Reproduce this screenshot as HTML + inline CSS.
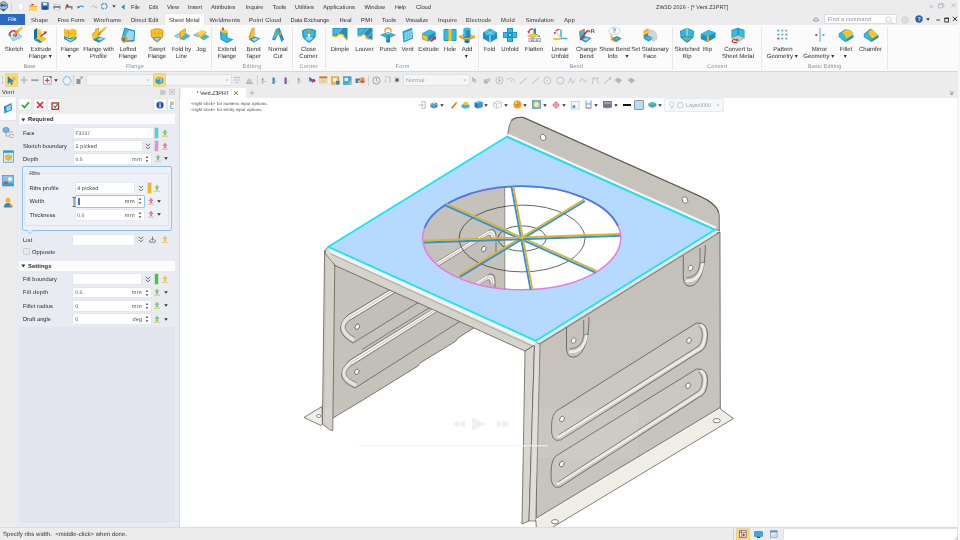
<!DOCTYPE html>
<html><head><meta charset="utf-8"><title>ZW3D 2026 - [* Vent.Z3PRT]</title>
<style>
html,body{margin:0;padding:0;background:#fff}
#r{filter:blur(0.35px);text-rendering:geometricPrecision;position:relative;width:960px;height:540px;overflow:hidden;background:#fff;font-family:"Liberation Sans",sans-serif;font-size:6px;color:#333}
.a{position:absolute}
.t{position:absolute;white-space:nowrap;line-height:10px;height:10px}
svg{position:absolute;overflow:visible}
</style></head>
<body><div id="r">
<div class="a" style="left:0px;top:0px;width:960px;height:25px;background:#ececed;"></div>
<div class="a" style="left:0px;top:24.7px;width:960px;height:46.6px;background:#fbfbfb;"></div>
<div class="a" style="left:0px;top:71.1px;width:960px;height:0.9px;background:#d6d7d9;"></div>
<div class="a" style="left:0px;top:72px;width:960px;height:15.5px;background:#ececed;"></div>
<div class="t" style="left:131.00px;top:3px;font-size:5.8px;color:#2c2c2c;letter-spacing:-0.086px;">File</div>
<div class="t" style="left:149.00px;top:3px;font-size:5.39px;color:#2c2c2c;letter-spacing:-0.072px;">Edit</div>
<div class="t" style="left:167.00px;top:3px;font-size:5.8px;color:#2c2c2c;letter-spacing:-0.117px;">View</div>
<div class="t" style="left:188.00px;top:3px;font-size:5.8px;color:#2c2c2c;letter-spacing:-0.084px;">Insert</div>
<div class="t" style="left:211.00px;top:3px;font-size:5.8px;color:#2c2c2c;letter-spacing:-0.050px;">Attributes</div>
<div class="t" style="left:245.50px;top:3px;font-size:5.8px;color:#2c2c2c;letter-spacing:0.038px;">Inquire</div>
<div class="t" style="left:272.50px;top:3px;font-size:5.8px;color:#2c2c2c;letter-spacing:-0.008px;">Tools</div>
<div class="t" style="left:295.00px;top:3px;font-size:5.8px;color:#2c2c2c;letter-spacing:0.034px;">Utilities</div>
<div class="t" style="left:323.00px;top:3px;font-size:5.8px;color:#2c2c2c;letter-spacing:0.061px;">Applications</div>
<div class="t" style="left:364.50px;top:3px;font-size:5.8px;color:#2c2c2c;letter-spacing:-0.021px;">Window</div>
<div class="t" style="left:395.00px;top:3px;font-size:5.39px;color:#2c2c2c;letter-spacing:-0.021px;">Help</div>
<div class="t" style="left:416.00px;top:3px;font-size:5.8px;color:#2c2c2c;letter-spacing:-0.031px;">Cloud</div>
<div class="t" style="left:656.00px;top:3px;font-size:5.4px;color:#2c2c2c;letter-spacing:0.114px;">ZW3D 2026 - [* Vent.Z3PRT]</div>
<div class="a" style="left:0px;top:14px;width:25px;height:10.7px;background:#2d69c2;"></div>
<div class="t" style="left:8.00px;top:15px;font-size:5.39px;color:#fff;letter-spacing:-0.046px;">File</div>
<div class="a" style="left:164.6px;top:14.3px;width:39px;height:11px;background:#fbfbfb;border-radius:1px 1px 0 0;box-shadow:0 0 0 0.5px #dcdfe3"></div>
<div class="a" style="left:164px;top:24.7px;width:41px;height:1px;background:#fbfbfb;"></div>
<div class="t" style="left:31.00px;top:16px;font-size:5.8px;color:#2c2c2c;letter-spacing:0.146px;">Shape</div>
<div class="t" style="left:57.50px;top:16px;font-size:5.8px;color:#2c2c2c;letter-spacing:-0.007px;">Free Form</div>
<div class="t" style="left:93.50px;top:16px;font-size:5.8px;color:#2c2c2c;letter-spacing:0.140px;">Wireframe</div>
<div class="t" style="left:131.00px;top:16px;font-size:5.8px;color:#2c2c2c;letter-spacing:0.068px;">Direct Edit</div>
<div class="t" style="left:169.00px;top:16px;font-size:5.8px;color:#2c2c2c;letter-spacing:-0.041px;">Sheet Metal</div>
<div class="t" style="left:209.50px;top:16px;font-size:5.8px;color:#2c2c2c;letter-spacing:0.178px;">Weldments</div>
<div class="t" style="left:249.00px;top:16px;font-size:5.8px;color:#2c2c2c;letter-spacing:0.229px;">Point Cloud</div>
<div class="t" style="left:290.50px;top:16px;font-size:5.8px;color:#2c2c2c;letter-spacing:-0.051px;">Data Exchange</div>
<div class="t" style="left:339.50px;top:16px;font-size:5.8px;color:#2c2c2c;letter-spacing:0.018px;">Heal</div>
<div class="t" style="left:361.00px;top:16px;font-size:5.8px;color:#2c2c2c;letter-spacing:0.396px;">PMI</div>
<div class="t" style="left:382.00px;top:16px;font-size:5.8px;color:#2c2c2c;letter-spacing:0.092px;">Tools</div>
<div class="t" style="left:405.50px;top:16px;font-size:5.8px;color:#2c2c2c;letter-spacing:-0.012px;">Visualize</div>
<div class="t" style="left:438.00px;top:16px;font-size:5.8px;color:#2c2c2c;letter-spacing:0.252px;">Inquire</div>
<div class="t" style="left:466.00px;top:16px;font-size:5.8px;color:#2c2c2c;letter-spacing:0.111px;">Electrode</div>
<div class="t" style="left:501.00px;top:16px;font-size:5.8px;color:#2c2c2c;letter-spacing:0.357px;">Mold</div>
<div class="t" style="left:525.50px;top:16px;font-size:5.8px;color:#2c2c2c;letter-spacing:0.142px;">Simulation</div>
<div class="t" style="left:564.00px;top:16px;font-size:5.8px;color:#2c2c2c;letter-spacing:0.227px;">App</div>
<div class="a" style="left:825.4px;top:15.1px;width:70.2px;height:7.7px;background:#fff;box-shadow:0 0 0 0.5px #c9ccd1"></div>
<div class="t" style="left:827.80px;top:15px;font-size:5.4px;color:#8a8f96;letter-spacing:0.235px;">Find a command</div>
<div class="a" style="left:56px;top:27px;width:0.7px;height:42.5px;background:#e7e8ea;"></div>
<div class="a" style="left:211px;top:27px;width:0.7px;height:42.5px;background:#e7e8ea;"></div>
<div class="a" style="left:291.8px;top:27px;width:0.7px;height:42.5px;background:#e7e8ea;"></div>
<div class="a" style="left:325.3px;top:27px;width:0.7px;height:42.5px;background:#e7e8ea;"></div>
<div class="a" style="left:478px;top:27px;width:0.7px;height:42.5px;background:#e7e8ea;"></div>
<div class="a" style="left:671.8px;top:27px;width:0.7px;height:42.5px;background:#e7e8ea;"></div>
<div class="a" style="left:761.3px;top:27px;width:0.7px;height:42.5px;background:#e7e8ea;"></div>
<div class="a" style="left:887px;top:27px;width:0.7px;height:42.5px;background:#e7e8ea;"></div>
<div class="t" style="left:23.50px;top:62px;font-size:5.5px;color:#8c9098;letter-spacing:-0.134px;">Base</div>
<div class="t" style="left:126.00px;top:62px;font-size:5.5px;color:#8c9098;letter-spacing:0.197px;">Flange</div>
<div class="t" style="left:242.50px;top:62px;font-size:5.5px;color:#8c9098;letter-spacing:0.312px;">Editing</div>
<div class="t" style="left:299.50px;top:62px;font-size:5.5px;color:#8c9098;letter-spacing:0.282px;">Corner</div>
<div class="t" style="left:395.50px;top:62px;font-size:5.5px;color:#8c9098;letter-spacing:0.292px;">Form</div>
<div class="t" style="left:569.50px;top:62px;font-size:5.5px;color:#8c9098;letter-spacing:0.164px;">Bend</div>
<div class="t" style="left:707.00px;top:62px;font-size:5.5px;color:#8c9098;letter-spacing:0.178px;">Convert</div>
<div class="t" style="left:808.00px;top:62px;font-size:5.5px;color:#8c9098;letter-spacing:0.131px;">Basic Editing</div>
<div class="t" style="left:4.83px;top:45px;font-size:6.0px;color:#2e2e2e;">Sketch</div>
<div class="t" style="left:30.66px;top:45px;font-size:6.0px;color:#2e2e2e;">Extrude</div>
<div class="t" style="left:28.74px;top:52px;font-size:6.0px;color:#2e2e2e;">Flange ▾</div>
<div class="t" style="left:60.83px;top:45px;font-size:6.0px;color:#2e2e2e;">Flange</div>
<div class="t" style="left:67.75px;top:52px;font-size:6.0px;color:#2e2e2e;">▾</div>
<div class="t" style="left:83.16px;top:45px;font-size:6.0px;color:#2e2e2e;">Flange with</div>
<div class="t" style="left:90.00px;top:52px;font-size:6.0px;color:#2e2e2e;">Profile</div>
<div class="t" style="left:119.66px;top:45px;font-size:6.0px;color:#2e2e2e;">Lofted</div>
<div class="t" style="left:118.83px;top:52px;font-size:6.0px;color:#2e2e2e;">Flange</div>
<div class="t" style="left:148.66px;top:45px;font-size:6.0px;color:#2e2e2e;">Swept</div>
<div class="t" style="left:147.83px;top:52px;font-size:6.0px;color:#2e2e2e;">Flange</div>
<div class="t" style="left:171.66px;top:45px;font-size:6.0px;color:#2e2e2e;">Fold by</div>
<div class="t" style="left:175.83px;top:52px;font-size:6.0px;color:#2e2e2e;">Line</div>
<div class="t" style="left:196.16px;top:45px;font-size:6.0px;color:#2e2e2e;">Jog</div>
<div class="t" style="left:217.66px;top:45px;font-size:6.0px;color:#2e2e2e;">Extend</div>
<div class="t" style="left:217.83px;top:52px;font-size:6.0px;color:#2e2e2e;">Flange</div>
<div class="t" style="left:246.49px;top:45px;font-size:6.0px;color:#2e2e2e;">Bend</div>
<div class="t" style="left:246.00px;top:52px;font-size:6.0px;color:#2e2e2e;">Taper</div>
<div class="t" style="left:268.33px;top:45px;font-size:6.0px;color:#2e2e2e;">Normal</div>
<div class="t" style="left:273.33px;top:52px;font-size:6.0px;color:#2e2e2e;">Cut</div>
<div class="t" style="left:300.83px;top:45px;font-size:6.0px;color:#2e2e2e;">Close</div>
<div class="t" style="left:299.33px;top:52px;font-size:6.0px;color:#2e2e2e;">Corner</div>
<div class="t" style="left:330.66px;top:45px;font-size:6.0px;color:#2e2e2e;">Dimple</div>
<div class="t" style="left:355.33px;top:45px;font-size:6.0px;color:#2e2e2e;">Louver</div>
<div class="t" style="left:379.49px;top:45px;font-size:6.0px;color:#2e2e2e;">Punch</div>
<div class="t" style="left:401.49px;top:45px;font-size:6.0px;color:#2e2e2e;">Vent</div>
<div class="t" style="left:418.16px;top:45px;font-size:6.0px;color:#2e2e2e;">Extrude</div>
<div class="t" style="left:443.83px;top:45px;font-size:6.0px;color:#2e2e2e;">Hole</div>
<div class="t" style="left:461.66px;top:45px;font-size:6.0px;color:#2e2e2e;">Add</div>
<div class="t" style="left:464.75px;top:52px;font-size:6.0px;color:#2e2e2e;">▾</div>
<div class="t" style="left:483.66px;top:45px;font-size:6.0px;color:#2e2e2e;">Fold</div>
<div class="t" style="left:501.33px;top:45px;font-size:6.0px;color:#2e2e2e;">Unfold</div>
<div class="t" style="left:524.83px;top:45px;font-size:6.0px;color:#2e2e2e;">Flatten</div>
<div class="t" style="left:551.66px;top:45px;font-size:6.0px;color:#2e2e2e;">Linear</div>
<div class="t" style="left:551.33px;top:52px;font-size:6.0px;color:#2e2e2e;">Unfold</div>
<div class="t" style="left:575.99px;top:45px;font-size:6.0px;color:#2e2e2e;">Change</div>
<div class="t" style="left:579.49px;top:52px;font-size:6.0px;color:#2e2e2e;">Bend</div>
<div class="t" style="left:599.16px;top:45px;font-size:6.0px;color:#2e2e2e;">Show Bend</div>
<div class="t" style="left:631.16px;top:45px;font-size:6.0px;color:#2e2e2e;">Set Stationary</div>
<div class="t" style="left:643.33px;top:52px;font-size:6.0px;color:#2e2e2e;">Face</div>
<div class="t" style="left:674.49px;top:45px;font-size:6.0px;color:#2e2e2e;">Sketched</div>
<div class="t" style="left:682.50px;top:52px;font-size:6.0px;color:#2e2e2e;">Rip</div>
<div class="t" style="left:703.00px;top:45px;font-size:6.0px;color:#2e2e2e;">Rip</div>
<div class="t" style="left:724.16px;top:45px;font-size:6.0px;color:#2e2e2e;">Convert to</div>
<div class="t" style="left:721.99px;top:52px;font-size:6.0px;color:#2e2e2e;">Sheet Metal</div>
<div class="t" style="left:773.33px;top:45px;font-size:6.0px;color:#2e2e2e;">Pattern</div>
<div class="t" style="left:766.75px;top:52px;font-size:6.0px;color:#2e2e2e;">Geometry ▾</div>
<div class="t" style="left:811.67px;top:45px;font-size:6.0px;color:#2e2e2e;">Mirror</div>
<div class="t" style="left:803.25px;top:52px;font-size:6.0px;color:#2e2e2e;">Geometry ▾</div>
<div class="t" style="left:839.67px;top:45px;font-size:6.0px;color:#2e2e2e;">Fillet</div>
<div class="t" style="left:843.75px;top:52px;font-size:6.0px;color:#2e2e2e;">▾</div>
<div class="t" style="left:859.00px;top:45px;font-size:6.0px;color:#2e2e2e;">Chamfer</div>
<svg style="left:7.0px;top:27.3px" width="16" height="16" viewBox="0 0 16 16"><polygon points="1,7 9,3 15,10 6,14" fill="#9fd8f2" stroke="#6aa9d6" stroke-width=".5"/><polygon points="2.5,7.3 8.5,4.3 11,7.5 5,10.5" fill="#ffffff" opacity=".8"/><path d="M3.5 9 A3.2 3.2 0 1 1 8 9.6" fill="none" stroke="#d9242b" stroke-width="1.3"/><line x1="7" y1="8" x2="13" y2="2.2" stroke="#e9951f" stroke-width="2.4" stroke-linecap="round" /><line x1="12" y1="3.2" x2="14.6" y2="0.8" stroke="#f6c520" stroke-width="2.4" stroke-linecap="round" /><polygon points="5.5,9.5 6.2,7.6 7.6,8.8" fill="#555" /></svg>
<svg style="left:33.0px;top:27.3px" width="16" height="16" viewBox="0 0 16 16"><polygon points="1,3 4,1 4,11 1,13" fill="#146c9e" /><polygon points="4,1 8.5,3.5 8.5,9 4,11.5" fill="#f6c520" /><polygon points="4,11.5 8.5,9 14,11.5 9.5,15 " fill="#f6c520" /><polygon points="1,13 4,11.5 9.5,15 7,16" fill="#1f8fc6" /><polygon points="4,1 8.5,3.5 8.5,5 4,2.5" fill="#fbdc55" /><line x1="8" y1="9" x2="12" y2="6" stroke="#d9242b" stroke-width="1.3" stroke-linecap="round" /><polygon points="10.5,4.5 14,4.6 12.5,7.6" fill="#d9242b" /></svg>
<svg style="left:62.0px;top:27.3px" width="16" height="16" viewBox="0 0 16 16"><polygon points="2,1.5 6,3 6,10.5 2,9" fill="#f6c520" /><polygon points="7.5,3 11,1.5 14.5,3 14.5,10 11,11.5 7.5,10.5" fill="#f6c520" /><polygon points="6,3 7.5,3 7.5,10.5 6,10.5" fill="#e9951f" /><polygon points="2,9 6,10.5 8,11 14.5,10 14.5,12 8.5,15.5 2,12" fill="#1f8fc6" /><polygon points="2.5,10.5 8.5,12.3 14,10.7 8.5,14.5" fill="#9fd8f2" /><line x1="2" y1="5" x2="6" y2="6.5" stroke="#e9951f" stroke-width="0.5" stroke-linecap="round" /><line x1="7.5" y1="6.5" x2="14.5" y2="6.3" stroke="#e9951f" stroke-width="0.5" stroke-linecap="round" /></svg>
<svg style="left:90.5px;top:27.3px" width="16" height="16" viewBox="0 0 16 16"><polygon points="1,7 4,4.5 4,2 8,0.8 8,9.5 2,13" fill="#e9951f" /><polygon points="1.5,7.5 4.5,5.2 4.5,2.8 7.5,1.8 7.5,9 2.3,12" fill="#f6c520" /><polygon points="2,13 8,9.5 14.5,11.5 8,15.8" fill="#1f8fc6" /><polygon points="6,12 9.5,10.5 13,11.6 9,13.8" fill="#9fd8f2" /><line x1="8.5" y1="6.5" x2="12.5" y2="2.5" stroke="#e9951f" stroke-width="2" stroke-linecap="round" /><line x1="12" y1="3" x2="14.5" y2="0.8" stroke="#f6c520" stroke-width="2" stroke-linecap="round" /><polygon points="7.5,8 8,6.3 9.3,7.4" fill="#555" /></svg>
<svg style="left:120.0px;top:27.3px" width="16" height="16" viewBox="0 0 16 16"><polygon points="4.5,0.5 15,3.5 14.5,14 3,15.5 1.5,11" fill="#1f8fc6" /><polygon points="5.5,2 14,4.5 13.5,12.8 5.5,13.5" fill="#9fd8f2" /><polygon points="5.5,2 9,3 4.5,11.5 2.5,10.5" fill="#30bfe4" /><circle cx="4.2" cy="12.2" r="2.6" fill="none" stroke="#e9951f" stroke-width="1.3"/><line x1="6.5" y1="13.5" x2="13" y2="14.6" stroke="#e9951f" stroke-width="1.1" stroke-linecap="round" /></svg>
<svg style="left:149.0px;top:27.3px" width="16" height="16" viewBox="0 0 16 16"><path d="M1.5 3 Q8 -0.5 14.5 3 L14 9.5 Q12 13 8 15.5 Q4 13 2 9.5 Z" fill="#e9951f" /><path d="M2.5 3.6 Q8 0.8 13.5 3.6 L13 9 Q11.5 11.5 8 11 Q4.5 11.5 3 9 Z" fill="#f6c520" /><polygon points="4.5,11.2 8,10 11.5,11.2 8,14.8" fill="#9fd8f2" stroke="#1f8fc6" stroke-width=".8"/><line x1="6" y1="2.3" x2="6" y2="10.5" stroke="#e9951f" stroke-width="0.5" stroke-linecap="round" /><line x1="10" y1="2.3" x2="10" y2="10.5" stroke="#e9951f" stroke-width="0.5" stroke-linecap="round" /><line x1="2.5" y1="6.5" x2="13.5" y2="6.5" stroke="#e9951f" stroke-width="0.5" stroke-linecap="round" /></svg>
<svg style="left:174.0px;top:27.3px" width="16" height="16" viewBox="0 0 16 16"><polygon points="0.5,9 5.5,6.5 8.5,8 3.5,10.8" fill="#9fd8f2" stroke="#1f8fc6" stroke-width=".5"/><polygon points="8.5,8 12,6.5 16,9 9.5,13 6.5,11.5" fill="#30bfe4" stroke="#1f8fc6" stroke-width=".5"/><polygon points="6,5 11.5,1.5 11.5,7 6.5,11.5" fill="#f6c520" stroke="#e9951f" stroke-width=".8"/><line x1="6" y1="5" x2="6.2" y2="13" stroke="#e9951f" stroke-width="0.9" stroke-linecap="round" /></svg>
<svg style="left:193.0px;top:27.3px" width="16" height="16" viewBox="0 0 16 16"><polygon points="0.5,8 4.5,6 8,7.5 4,9.8" fill="#9fd8f2" stroke="#1f8fc6" stroke-width=".5"/><polygon points="7,10 12,7.5 16,9.8 10.5,13" fill="#30bfe4" stroke="#1f8fc6" stroke-width=".5"/><polygon points="4,6.5 9,3.5 13,5 12.5,7.5 7.5,10.5 4.5,9" fill="#f6c520" stroke="#e9951f" stroke-width=".6"/><polygon points="4,6.5 9,3.5 13,5 8,8" fill="#fbdc55" /></svg>
<svg style="left:219.0px;top:27.3px" width="16" height="16" viewBox="0 0 16 16"><polygon points="1,4 2.5,3 8.5,5 8.5,10.5 14.5,12.5 8,16 1.5,12.5" fill="#1f8fc6" /><polygon points="2.5,4.5 7.5,6.2 7.5,11 12.5,12.6 8,14.8 2.5,12" fill="#30bfe4" /><polygon points="1,4 2.5,2 8.5,3.5 8.5,5.5 7,6.5 1.5,5" fill="#f6c520" /><polygon points="3.2,0.5 4.8,0.5 4.8,3 3.2,3" fill="#d9242b" /></svg>
<svg style="left:245.5px;top:27.3px" width="16" height="16" viewBox="0 0 16 16"><polygon points="6,1 8.5,0.5 8.5,9.5 3,12.5 2.5,10" fill="#e9951f" /><polygon points="6.5,2 8,1.8 8,9 3.5,11.5" fill="#f6c520" /><polygon points="3,12.5 8.5,9.5 14.5,11.5 8,15.5" fill="#1f8fc6" /><polygon points="5.5,12.5 9,10.7 12.8,11.8 8.5,14.2" fill="#9fd8f2" /></svg>
<svg style="left:270.0px;top:27.3px" width="16" height="16" viewBox="0 0 16 16"><polygon points="6,2 9.5,0.8 14,12.5 11.5,15 8.5,7 5,13.5 2,12.5" fill="#1f8fc6" /><polygon points="6.5,3 9,2 8.5,6.5 4.5,12 3,11.8" fill="#30bfe4" /><ellipse cx="5.8" cy="8.2" rx="1.1" ry="1.6" fill="#e9951f" /><ellipse cx="10.3" cy="6.6" rx="1.1" ry="1.6" fill="#e9951f" /></svg>
<svg style="left:300.5px;top:27.3px" width="16" height="16" viewBox="0 0 16 16"><path d="M1 3.5 Q8 -0.5 15 3.5 L14.5 10 Q12 13.5 8 16 Q4 13.5 1.5 10 Z" fill="#1f8fc6" /><polygon points="2.5,4 7,2.3 7,9 2.8,10" fill="#30bfe4" /><polygon points="9,2.3 13.5,4 13.2,10 9,9" fill="#30bfe4" /><polygon points="7,2.3 9,2.3 9,7.5 7,7.5" fill="#e9951f" /><polygon points="3.5,11 8,9 12.5,11 8,14.5" fill="#9fd8f2" /><path d="M6.8 7 L9.2 7 L9.2 9 L8 10.2 L6.8 9 Z" fill="#ffffff" /></svg>
<svg style="left:332.0px;top:27.3px" width="16" height="16" viewBox="0 0 16 16"><polygon points="0.5,1 15.5,1 15.5,13 13,11 10.5,7.5 7,7 4.5,9.5 0.5,9" fill="#1f8fc6" /><polygon points="1.5,1.5 9,1.5 3,8.2 1.5,8" fill="#30bfe4" /><path d="M0.5 9.2 L4.5 9.7 L7 7.2 L10.5 7.7 L13 11.2 L15.5 13.2" fill="none" stroke="#f6c520" stroke-width="1.3"/><line x1="10" y1="1.5" x2="5.5" y2="6.5" stroke="#ffffff" stroke-width="0.8" stroke-linecap="round" opacity=".8"/></svg>
<svg style="left:356.5px;top:27.3px" width="16" height="16" viewBox="0 0 16 16"><polygon points="0.5,1 15.5,1 15.5,12.5 9,11.5 9,9 6.5,7 4,9 0.5,9" fill="#1f8fc6" /><polygon points="1.5,1.5 9,1.5 3,8.2 1.5,8" fill="#30bfe4" /><path d="M0.5 9.2 L4 9.2 L6.5 7.2 L9 9.2 L9 11.6 L15.5 12.8" fill="none" stroke="#f6c520" stroke-width="1.2"/><line x1="11" y1="1.5" x2="6.5" y2="6.3" stroke="#ffffff" stroke-width="0.8" stroke-linecap="round" opacity=".8"/><line x1="10" y1="11" x2="15.5" y2="5" stroke="#9fd8f2" stroke-width="0.8" stroke-linecap="round" /></svg>
<svg style="left:380.0px;top:27.3px" width="16" height="16" viewBox="0 0 16 16"><polygon points="0,8 8,5 16,8 8,11.5" fill="#1f8fc6" /><polygon points="1.5,8 8,5.8 14.5,8 8,10.5" fill="#30bfe4" /><path d="M5 5.5 L5 2.5 Q8 -0.5 11 2.5 L11 5.5" fill="none" stroke="#e9951f" stroke-width="1.2"/><rect x="6" y="6.5" width="4" height="8" fill="#1f8fc6" /><ellipse cx="8" cy="14.5" rx="2" ry="1" fill="#146c9e" /><ellipse cx="8" cy="6.5" rx="2" ry="1" fill="#9fd8f2" /><rect x="6.6" y="7" width="1.2" height="7.5" fill="#30bfe4" /></svg>
<svg style="left:399.5px;top:27.3px" width="16" height="16" viewBox="0 0 16 16"><polygon points="2.5,4.5 12,0.8 13,11.5 3.5,15.5" fill="#1f8fc6" /><polygon points="3.5,5.2 11.2,2.2 12,10.8 4.3,14.2" fill="#30bfe4" /><polygon points="4.6,6.0 6.6,5.2 6.8,7.2 4.8,8.0" fill="#9fd8f2" /><polygon points="4.6,8.8 6.6,8.0 6.8,10.0 4.8,10.8" fill="#9fd8f2" /><polygon points="4.6,11.6 6.6,10.8 6.8,12.8 4.8,13.6" fill="#9fd8f2" /><polygon points="7.3,4.974 9.3,4.174 9.5,6.174 7.5,6.974" fill="#9fd8f2" /><polygon points="7.3,7.774000000000001 9.3,6.974 9.5,8.974 7.5,9.774000000000001" fill="#9fd8f2" /><polygon points="7.3,10.574 9.3,9.774000000000001 9.5,11.774000000000001 7.5,12.574" fill="#9fd8f2" /><polygon points="9.8,4.024 11.8,3.224 12.0,5.224 10.0,6.024" fill="#9fd8f2" /><polygon points="9.8,6.824000000000001 11.8,6.024 12.0,8.024 10.0,8.824" fill="#9fd8f2" /><polygon points="9.8,9.623999999999999 11.8,8.824 12.0,10.824 10.0,11.623999999999999" fill="#9fd8f2" /></svg>
<svg style="left:420.5px;top:27.3px" width="16" height="16" viewBox="0 0 16 16"><polygon points="1,6.5 8.5,2.5 14.5,5 14.5,10 7,14.5 1,12" fill="#1f8fc6" /><polygon points="1,6.5 8.5,2.5 14.5,5 7,9" fill="#30bfe4" /><polygon points="1.3,7.2 6.8,9.5 6.8,14 1.3,11.7" fill="#f6c520" stroke="#e9951f" stroke-width=".5"/><line x1="10" y1="14" x2="13.5" y2="11.5" stroke="#d9242b" stroke-width="1.6" stroke-linecap="round" /><polygon points="12,10 15.5,9.8 14.5,13" fill="#d9242b" /></svg>
<svg style="left:442.0px;top:27.3px" width="16" height="16" viewBox="0 0 16 16"><rect x="1.5" y="2" width="13" height="12" fill="#1f8fc6" rx="1"/><rect x="2.3" y="2.8" width="4" height="10.4" fill="#30bfe4" /><rect x="9.7" y="2.8" width="4" height="10.4" fill="#30bfe4" /><rect x="6.3" y="2" width="3.4" height="12" fill="#f6c520" /></svg>
<svg style="left:459.0px;top:27.3px" width="16" height="16" viewBox="0 0 16 16"><polygon points="0,9 8,6 16,9 16,10.5 8,14 0,10.5" fill="#e9951f" /><polygon points="0,9 8,6 16,9 8,12.2" fill="#f6c520" /><rect x="4.5" y="2" width="7" height="7.5" fill="#1f8fc6" /><ellipse cx="8" cy="9.5" rx="3.5" ry="1.5" fill="#1f8fc6" /><ellipse cx="8" cy="2" rx="3.5" ry="1.5" fill="#30bfe4" /><rect x="5" y="3.5" width="2" height="6" fill="#30bfe4" /><rect x="5.5" y="12.5" width="5" height="2.5" fill="#1f8fc6" /><ellipse cx="8" cy="15" rx="2.5" ry="1" fill="#146c9e" /></svg>
<svg style="left:481.5px;top:27.3px" width="16" height="16" viewBox="0 0 16 16"><path d="M1 5.5 L8 1.5 L15 5.5 L15 11.5 L8 15.5 L1 11.5 Z" fill="#1f8fc6" stroke-linejoin="round"/><polygon points="1.5,5.7 8,2.3 14.5,5.7 8,9" fill="#30bfe4" /><polygon points="1.5,6.5 7.5,9.6 7.5,14.6 1.5,11.2" fill="#1f8fc6" /><line x1="8" y1="9" x2="8" y2="15" stroke="#ffffff" stroke-width="0.9" stroke-linecap="round" /><line x1="4" y1="4" x2="12" y2="8" stroke="#9fd8f2" stroke-width="0.6" stroke-linecap="round" /><line x1="12" y1="4" x2="4" y2="8" stroke="#9fd8f2" stroke-width="0.6" stroke-linecap="round" /></svg>
<svg style="left:502.0px;top:27.3px" width="16" height="16" viewBox="0 0 16 16"><path d="M5 1 h6 v4 h4 v6 h-4 v4 h-6 v-4 h-4 v-6 h4 z" fill="#1f8fc6" stroke-linejoin="round" rx="1"/><rect x="5.8" y="1.8" width="4.4" height="3.4" fill="#30bfe4" /><rect x="1.8" y="5.8" width="3.4" height="4.4" fill="#30bfe4" /><rect x="10.8" y="5.8" width="3.4" height="4.4" fill="#30bfe4" /><rect x="5.8" y="10.8" width="4.4" height="3.4" fill="#30bfe4" /><rect x="7" y="7" width="2" height="2" fill="#9fd8f2" /></svg>
<svg style="left:526.0px;top:27.3px" width="16" height="16" viewBox="0 0 16 16"><polygon points="7.5,1.5 10,1.5 10,7 14,8.5 14,10 7.5,8" fill="#1f8fc6" /><polygon points="1.5,8 7.5,6.5 14,8.5 8,10.5" fill="#f6c520" /><polygon points="1.5,8 8,10.5 8,11.5 1.5,9" fill="#e9951f" /><rect x="2.5" y="11.3" width="12.5" height="3.7" fill="#8e9bb0" /><rect x="3.2" y="12" width="11" height="2.2" fill="#dfe6f0" /><rect x="5" y="12.6" width="3" height="1" fill="#5577aa" /><rect x="10" y="12.6" width="2" height="1" fill="#5577aa" /><path d="M7 2.2 Q3.5 1.5 2.8 5" fill="none" stroke="#d9242b" stroke-width="1.2"/><polygon points="1.3,4.3 4.3,4.6 2.8,6.8" fill="#d9242b" /></svg>
<svg style="left:552.5px;top:27.3px" width="16" height="16" viewBox="0 0 16 16"><path d="M8 2.5 L8 11.5 L14.5 11.5" fill="none" stroke="#30bfe4" stroke-width="1.6"/><line x1="1" y1="12" x2="7" y2="12" stroke="#f6c520" stroke-width="1.8" stroke-linecap="round" /><path d="M6.5 2.5 Q2.5 2.5 1.8 6" fill="none" stroke="#d9242b" stroke-width="1.1"/><polygon points="0.6,5 3.2,5.5 1.8,7.6" fill="#d9242b" /><line x1="7.5" y1="10.5" x2="2.5" y2="4.5" stroke="#d0d4da" stroke-width="1.2" stroke-linecap="round" /></svg>
<svg style="left:577.5px;top:27.3px" width="16" height="16" viewBox="0 0 16 16"><polygon points="1,4.5 6.5,1.5 7,9 2,12.5" fill="#1f8fc6" /><polygon points="2,12.5 7,9 13.5,11 8,15.5" fill="#1f8fc6" /><polygon points="2,5.3 5.8,3 6.2,8.8 2.8,11" fill="#30bfe4" /><polygon points="5,12.6 8,10.5 11.5,11.5 8,14" fill="#9fd8f2" /><line x1="2.5" y1="12.5" x2="9.5" y2="3.5" stroke="#d9242b" stroke-width="1.4" stroke-linecap="round" /><polygon points="1.5,4.8 6.5,2 6.7,3.2 1.8,6" fill="#e9951f" /></svg>
<svg style="left:606.5px;top:27.3px" width="16" height="16" viewBox="0 0 16 16"><polygon points="3.5,6 5,5.5 5.5,11 10,9 15,11.5 9,15.5 4,13" fill="#e9951f" /><polygon points="4,6.5 5,6 5.5,11.5 4.4,12.4" fill="#f6c520" /><polygon points="5.5,11.5 10,9.3 14,11.4 9,14.5" fill="#1f8fc6" /><polygon points="7,12 10,10.5 12.5,11.5 9.3,13.5" fill="#30bfe4" /><ellipse cx="7.5" cy="4" rx="5.5" ry="3.8" fill="#ffffff" stroke="#9fc4e8" stroke-width=".7"/><polygon points="5,7 7,7.2 4.5,9.2" fill="#ffffff" /></svg>
<svg style="left:642.0px;top:27.3px" width="16" height="16" viewBox="0 0 16 16"><polygon points="1.5,4 6.5,1 6.5,8.5 1.5,11.5" fill="#e9951f" /><polygon points="2,5 6,2.6 6,6 2,8.4" fill="#f6c520" /><polygon points="2,8.6 6,6.2 6,8.3 2,10.8" fill="#1f8fc6" /><polygon points="1.5,11.5 6.5,8.5 12,11 6.5,14.5" fill="#1f8fc6" /><polygon points="3,11.5 6.5,9.5 10.3,11 6.7,13.3" fill="#30bfe4" /><path d="M7 3 Q12 2 14.5 7 L15 12 L11 14.5 Q9 9 7 7 Z" fill="#c9ced6" opacity=".85" stroke="#a9b0bb" stroke-width=".5"/></svg>
<svg style="left:679.0px;top:27.3px" width="16" height="16" viewBox="0 0 16 16"><path d="M1 4 L8 0.8 L15 4 L14.5 10.5 Q11 14 8 15.8 Q5 14 1.5 10.5 Z" fill="#1f8fc6" /><polygon points="2,4.5 7.4,2 7.4,8.5 2.4,10" fill="#30bfe4" /><polygon points="8.6,2 14,4.5 13.6,10 8.6,8.5" fill="#30bfe4" /><polygon points="3,11 8,9.2 13,11 8,14.5" fill="#30bfe4" /><line x1="8" y1="1" x2="8" y2="8.5" stroke="#ffffff" stroke-width="0.9" stroke-linecap="round" /><path d="M4 12 Q6 10.2 8 11.6 T12 11.4" fill="none" stroke="#e9951f" stroke-width="1"/><circle cx="4" cy="6.5" r="0.45" fill="#d9242b" /><circle cx="6" cy="6" r="0.45" fill="#d9242b" /><circle cx="10" cy="6" r="0.45" fill="#d9242b" /><circle cx="12" cy="6.5" r="0.45" fill="#d9242b" /></svg>
<svg style="left:699.5px;top:27.3px" width="16" height="16" viewBox="0 0 16 16"><polygon points="0.8,7 8.5,3 15.5,5.5 15.5,10.5 7.5,15 0.8,12" fill="#1f8fc6" /><polygon points="0.8,7 8.5,3 15.5,5.5 7.5,9.5" fill="#30bfe4" /><polygon points="1.5,8 7,10.3 7,14 1.5,11.5" fill="#1f8fc6" /><rect x="7" y="9.2" width="1.8" height="5.6" fill="#f6c520" stroke="#e9951f" stroke-width=".5"/></svg>
<svg style="left:730.0px;top:27.3px" width="16" height="16" viewBox="0 0 16 16"><polygon points="1.5,3 8,0.8 8,8.5 1.5,11" fill="#1f8fc6" /><polygon points="8,0.8 14.5,3 14.5,11 8,8.5" fill="#1f8fc6" /><polygon points="2.3,3.8 7.3,2 7.3,8.2 2.3,10" fill="#30bfe4" /><polygon points="8.7,2 13.8,3.8 13.8,10 8.7,8.2" fill="#30bfe4" /><polygon points="1.5,11 8,8.5 14.5,11 8,14.5" fill="#9fd8f2" stroke="#e9951f" stroke-width=".8"/><path d="M7.5 13 Q2 12 2 14.2 Q2.5 16 7 15.5" fill="none" stroke="#d9242b" stroke-width="1.1"/><polygon points="6.3,11.8 8.8,13 6.5,14.3" fill="#d9242b" /></svg>
<svg style="left:775.0px;top:27.3px" width="16" height="16" viewBox="0 0 16 16"><circle cx="3.3" cy="3.6" r="1.15" fill="#4a9fd0" opacity=".85"/><circle cx="3.3" cy="7.6" r="1.15" fill="#4a9fd0" opacity=".85"/><circle cx="3.3" cy="11.6" r="1.15" fill="#d9242b" opacity=".85"/><circle cx="7.3" cy="3.6" r="1.15" fill="#4a9fd0" opacity=".85"/><circle cx="7.3" cy="7.6" r="1.15" fill="#4a9fd0" opacity=".85"/><circle cx="7.3" cy="11.6" r="1.15" fill="#4a9fd0" opacity=".85"/><circle cx="11.3" cy="3.6" r="1.15" fill="#4a9fd0" opacity=".85"/><circle cx="11.3" cy="7.6" r="1.15" fill="#4a9fd0" opacity=".85"/><circle cx="11.3" cy="11.6" r="1.15" fill="#4a9fd0" opacity=".85"/></svg>
<svg style="left:811.5px;top:27.3px" width="16" height="16" viewBox="0 0 16 16"><line x1="8" y1="1.5" x2="8" y2="14.5" stroke="#55aadd" stroke-width="1" stroke-linecap="round" /><circle cx="4.2" cy="8" r="1.1" fill="#d9242b" /><circle cx="11.5" cy="8" r="1.1" fill="#5b9bd0" /></svg>
<svg style="left:838.0px;top:27.3px" width="16" height="16" viewBox="0 0 16 16"><polygon points="0.8,6.5 7.5,2 8.5,2 1.5,7.5 8.5,14 8.5,15 6.5,14.5 0.8,10" fill="#1f8fc6" /><path d="M1.5 7.2 L8 2.6 Q13.5 2 15.5 8 L15.5 10.5 L8.5 14.5 L1.5 10 Z" fill="#30bfe4" /><path d="M8 3 Q13.5 2.5 15 8 L8.5 12 Q7 7 4 5.8 Z" fill="#f6c520" /><polygon points="8.5,12 15,8 15.2,10.6 8.6,14.4" fill="#1f8fc6" /></svg>
<svg style="left:862.5px;top:27.3px" width="16" height="16" viewBox="0 0 16 16"><polygon points="0.8,7 7,2 8.5,2 15.5,8.5 15.5,10.5 8.5,15 0.8,10" fill="#1f8fc6" /><polygon points="1.5,7.5 7,2.8 4.5,6.3 8.3,12 8.3,14 1.5,9.8" fill="#30bfe4" /><polygon points="7.5,2.5 10,2.8 15,8.3 9,12 5,6.2" fill="#f6c520" /><polygon points="9,12 15,8.3 15.2,10.3 8.8,14.3" fill="#1f8fc6" /></svg>
<div class="t" style="left:587.60px;top:27px;font-size:5.6px;color:#c8202a;font-weight:bold;">+R</div>
<div class="t" style="left:612.30px;top:27px;font-size:6.5px;color:#2f7fd0;font-weight:bold;">?</div>
<div class="t" style="left:607.50px;top:52px;font-size:6.0px;color:#2e2e2e;">Info</div>
<div class="t" style="left:625.45px;top:52px;font-size:6.0px;color:#2e2e2e;">▾</div>
<svg style="left:-2px;top:0.5px" width="11" height="11" viewBox="0 0 11 11"><circle cx="5.5" cy="5" r="4.2" fill="#aebccb" stroke="#4f6478" stroke-width=".8"/><circle cx="4" cy="4.3" r="1.4" fill="#1f4f8a"/><circle cx="7" cy="4.3" r="1.4" fill="#2e7fc0"/><path d="M3 8 L5.5 10.8 L8 8 Z" fill="#2567b0"/></svg>
<div class="a" style="left:11px;top:2.5px;width:0.6px;height:8px;background:#d0d3d7;"></div>
<svg style="left:18.2px;top:3.2px" width="6" height="7" viewBox="0 0 6 7"><path d="M.4 .4 H3.6 L5.4 2.2 V6.6 H.4 Z" fill="#fff" stroke="#d3d7dc" stroke-width=".5"/></svg>
<svg style="left:28.6px;top:2.6px" width="8.8" height="7.9" viewBox="0 0 10 9"><path d="M.5 2 H4 L5 3 H9 V8.5 H.5 Z" fill="#f2b632"/><path d="M1.5 4.5 H9.5 L8.5 8.5 H.5 Z" fill="#fbd768"/><path d="M3 .5 L6 2 L3 2.8Z" fill="#d9242b"/></svg>
<svg style="left:40.6px;top:2.4px" width="8" height="8" viewBox="0 0 9 9"><rect x=".3" y=".3" width="8.4" height="8.4" rx=".8" fill="#2a6cb0"/><rect x="2" y=".8" width="5" height="3" fill="#dfe9f4"/><rect x="2" y="5.3" width="5" height="3.2" fill="#1b4f86"/></svg>
<svg style="left:52.8px;top:4px" width="7.8" height="6.2" viewBox="0 0 10 8"><rect x="2" y=".3" width="6" height="3" fill="#e9ecef" stroke="#8a9098" stroke-width=".4"/><rect x=".3" y="2.6" width="9.4" height="3.6" rx=".6" fill="#7d8590"/><rect x="2" y="5" width="6" height="2.8" fill="#f4f5f6" stroke="#8a9098" stroke-width=".4"/></svg>
<svg style="left:64.7px;top:4px" width="7.8" height="6.2" viewBox="0 0 10 8"><rect x=".3" y="2.6" width="9.4" height="4.6" rx=".6" fill="#7d8590"/><rect x="2" y="5" width="6" height="2.8" fill="#e8eaec"/><circle cx="3" cy="2" r="1.6" fill="#d9242b"/></svg>
<svg style="left:77px;top:3.8px" width="7.5" height="5" viewBox="0 0 9 6"><path d="M1.5 4.5 Q4 .5 8 3.8" fill="none" stroke="#2f86c8" stroke-width="1.3"/><path d="M.3 2 L.6 5.3 L3.6 4.6 Z" fill="#2f86c8"/></svg>
<svg style="left:89.5px;top:3.8px" width="7.5" height="5" viewBox="0 0 9 6"><path d="M7.5 4.5 Q5 .5 1 3.8" fill="none" stroke="#c3c8cf" stroke-width="1.3"/><path d="M8.7 2 L8.4 5.3 L5.4 4.6 Z" fill="#c3c8cf"/></svg>
<svg style="left:100.3px;top:2.3px" width="8.4" height="8.4" viewBox="0 0 10 10"><circle cx="5" cy="5" r="3.4" fill="none" stroke="#2f9bd8" stroke-width="1.3" stroke-dasharray="4.2 1.2"/></svg>
<svg style="left:112.2px;top:5px" width="4" height="3.2" viewBox="0 0 5 4"><path d="M.3 .3 H4.7 L2.5 3.5Z" fill="#444"/></svg>
<svg style="left:120.5px;top:3.5px" width="4" height="6" viewBox="0 0 4 6"><path d="M3.6 .2 V5.8 L.3 3Z" fill="#2f86c8"/></svg>
<svg style="left:928.6px;top:5.4px" width="5" height="3.2" viewBox="0 0 5 3.2"><rect x=".5" y=".5" width="3.6" height="2" rx="1" fill="none" stroke="#b4b8be" stroke-width=".7"/></svg>
<svg style="left:938.3px;top:3px" width="6.4" height="5.6" viewBox="0 0 8 7"><rect x=".5" y="2" width="4.8" height="4.2" fill="none" stroke="#a3a8af" stroke-width=".7"/><path d="M2 2 V.5 H7.2 V5 H5.4" fill="none" stroke="#a3a8af" stroke-width=".7"/></svg>
<svg style="left:950.8px;top:3px" width="5.6" height="4.8" viewBox="0 0 7 6"><path d="M.8 .6 L5.8 5.2 M5.8 .6 L.8 5.2" stroke="#a3a8af" stroke-width=".8" fill="none"/></svg>
<svg style="left:813px;top:17px" width="6" height="5" viewBox="0 0 6 5"><path d="M.6 4 Q.6 1 3 1 Q5.4 1 5.4 4 Z" fill="none" stroke="#7b8088" stroke-width=".7"/></svg>
<svg style="left:885px;top:15.5px" width="8" height="8" viewBox="0 0 8 8"><circle cx="3.5" cy="3.5" r="2.6" fill="none" stroke="#b5b9bf" stroke-width=".7"/><path d="M5.5 5.5 L7.4 7.4" stroke="#b5b9bf" stroke-width=".8"/></svg>
<svg style="left:900.5px;top:15.5px" width="8" height="8" viewBox="0 0 8 8"><circle cx="4" cy="4" r="3.3" fill="none" stroke="#b9bdc3" stroke-width=".7"/><circle cx="4" cy="4" r="1.5" fill="none" stroke="#b9bdc3" stroke-width=".6"/></svg>
<svg style="left:915px;top:15px" width="8" height="8" viewBox="0 0 8 8"><circle cx="4" cy="4" r="3.7" fill="#2a5fb4"/></svg>
<div class="t" style="left:917.60px;top:15px;font-size:5.5px;color:#fff;font-weight:bold;">?</div>
<svg style="left:925.5px;top:17.5px" width="4" height="3" viewBox="0 0 4 3"><path d="M.2 .3 H3.8 L2 2.7Z" fill="#333"/></svg>
<svg style="left:936px;top:19px" width="5" height="2" viewBox="0 0 5 2"><path d="M.3 1 H4" stroke="#333" stroke-width=".9"/></svg>
<svg style="left:943.5px;top:16.5px" width="6" height="6" viewBox="0 0 6 6"><rect x=".8" y="1.2" width="3.8" height="3.8" fill="none" stroke="#222" stroke-width=".8"/><path d="M.6 1.3 H4.8" stroke="#222" stroke-width="1"/></svg>
<svg style="left:952px;top:16px" width="6" height="6" viewBox="0 0 6 6"><path d="M.8 .8 L5 5 M5 .8 L.8 5" stroke="#222" stroke-width=".9" fill="none"/></svg>
<div class="a" style="left:2.3px;top:76.0px;width:1px;height:1px;background:#a9adb3;"></div>
<div class="a" style="left:2.3px;top:78.4px;width:1px;height:1px;background:#a9adb3;"></div>
<div class="a" style="left:2.3px;top:80.8px;width:1px;height:1px;background:#a9adb3;"></div>
<div class="a" style="left:2.3px;top:83.2px;width:1px;height:1px;background:#a9adb3;"></div>
<div class="a" style="left:5.5px;top:74.3px;width:11.5px;height:11.5px;background:#fbd96a;box-shadow:0 0 0 .5px #e8b93a"></div>
<svg style="left:7px;top:75.5px" width="9" height="9" viewBox="0 0 9 9"><path d="M1 .8 L1 7.6 L3 5.8 L4.4 8.6 L5.6 8 L4.2 5.3 L6.8 5.2 Z" fill="#2f86c8" stroke="#1b5f9a" stroke-width=".4"/><rect x="5.5" y="1" width="3" height="3" fill="#f2b632"/></svg>
<svg style="left:19.5px;top:76px" width="8" height="8" viewBox="0 0 8 8"><path d="M4 .5 V7.5 M.5 4 H7.5" stroke="#b9bfc6" stroke-width="1.6"/></svg>
<svg style="left:31px;top:79px" width="8" height="3" viewBox="0 0 8 3"><rect x=".3" y=".3" width="7.4" height="1.8" fill="#9ea4ab"/></svg>
<svg style="left:43px;top:75.5px" width="9" height="9" viewBox="0 0 9 9"><rect x=".5" y=".5" width="7.6" height="7.6" fill="#fff" stroke="#5b8fc4" stroke-width=".7"/><path d="M4.3 2 V6.6 M2 4.3 H6.6" stroke="#d9242b" stroke-width="1"/><path d="M6.5 0 L9 1 L7 2.5Z" fill="#d9242b"/></svg>
<svg style="left:54px;top:79px" width="4" height="3" viewBox="0 0 4 3"><path d="M.2 .3 H3.8 L2 2.7Z" fill="#333"/></svg>
<svg style="left:61.5px;top:75.5px" width="10" height="10" viewBox="0 0 10 10"><path d="M3 .8 H7 L9.2 4.8 L7 8.8 H3 L.8 4.8 Z" fill="#eef0f2" stroke="#6fb0dd" stroke-width=".8"/></svg>
<div class="a" style="left:73.3px;top:75px;width:0.6px;height:11px;background:#cdd0d4;"></div>
<svg style="left:76.3px;top:76px" width="8" height="9" viewBox="0 0 8 9"><rect x=".5" y="3" width="4" height="5" fill="#8b9199"/><path d="M3.5 .5 H7.5 L5.5 3.5Z" fill="#a5abb3"/></svg>
<div class="a" style="left:86.5px;top:75.3px;width:66px;height:9.6px;background:#f4f5f6;box-shadow:0 0 0 .5px #d3d6da"></div>
<svg style="left:146px;top:79.2px" width="4" height="3" viewBox="0 0 4 3"><path d="M.5 .5 H3.3 L1.9 2.2Z" fill="#b9bdc3"/></svg>
<div class="a" style="left:153.5px;top:74.3px;width:11.5px;height:11.5px;background:#fbd96a;box-shadow:0 0 0 .5px #e8b93a"></div>
<svg style="left:155.3px;top:75.7px" width="9" height="9" viewBox="0 0 9 9"><path d="M.5 3 L4 .8 L8.2 2.5 L8.2 6.5 L4.5 8.5 L.5 6.8 Z" fill="#2f9bd8"/><path d="M2 3.5 Q4.5 1 6.5 3.2 Q7 6 4.5 6.5" fill="none" stroke="#fbe9a0" stroke-width="1"/><path d="M4 2 L7 2.2 L5.5 4.5 Z" fill="#f2b632"/></svg>
<div class="a" style="left:166px;top:75.3px;width:65px;height:9.6px;background:#f4f5f6;box-shadow:0 0 0 .5px #d3d6da"></div>
<svg style="left:224.5px;top:79.2px" width="4" height="3" viewBox="0 0 4 3"><path d="M.5 .5 H3.3 L1.9 2.2Z" fill="#b9bdc3"/></svg>
<svg style="left:233px;top:76px" width="8" height="8" viewBox="0 0 8 8"><path d="M.5 1.5 H7 M.5 4 H7 M2.5 6.5 H5" stroke="#b0b5bc" stroke-width=".8"/></svg>
<svg style="left:244.5px;top:75.5px" width="9" height="9" viewBox="0 0 9 9"><path d="M2 4 Q4 .5 6.5 4 V7 H2 Z" fill="#c3c7cd"/><rect x="1" y="6.5" width="7" height="1.5" fill="#b0b5bc"/></svg>
<div class="a" style="left:256.6px;top:75px;width:0.6px;height:11px;background:#cdd0d4;"></div>
<svg style="left:259.5px;top:76.5px" width="8" height="8" viewBox="0 0 8 8"><rect x="1.5" y=".5" width="2.2" height="6.5" fill="#c3c7cd"/><rect x="4.5" y="4" width="1" height="1" fill="#9aa0a8"/><rect x="2" y="2" width="1.2" height="1.2" fill="#d9242b" opacity=".6"/></svg>
<svg style="left:271px;top:76.5px" width="8" height="8" viewBox="0 0 8 8"><rect x="1.5" y=".5" width="2.2" height="6.5" fill="#3f8fd0"/><rect x="4.5" y="4" width="1" height="1" fill="#9aa0a8"/><rect x="2" y="2" width="1.2" height="1.2" fill="#d9242b" opacity=".6"/></svg>
<svg style="left:283px;top:76.5px" width="8" height="8" viewBox="0 0 8 8"><rect x="1.5" y=".5" width="2.2" height="6.5" fill="#7a5fb0"/><rect x="4.5" y="4" width="1" height="1" fill="#9aa0a8"/><rect x="2" y="2" width="1.2" height="1.2" fill="#d9242b" opacity=".6"/></svg>
<svg style="left:295.5px;top:76.5px" width="8" height="8" viewBox="0 0 8 8"><rect x="1.5" y=".5" width="2.2" height="6.5" fill="#c3c7cd"/><rect x="4.5" y="4" width="1" height="1" fill="#9aa0a8"/><rect x="2" y="2" width="1.2" height="1.2" fill="#d9242b" opacity=".6"/></svg>
<svg style="left:307.5px;top:76px" width="9" height="9" viewBox="0 0 9 9"><path d="M1 .8 L1.5 6 L3 4.8 L4.2 7 L5.2 6.5 L4.2 4.4 L6 4.2 Z" fill="#2f6fc0"/><circle cx="5.8" cy="4.6" r="1.5" fill="#d9242b"/></svg>
<svg style="left:319px;top:76px" width="9" height="8" viewBox="0 0 9 8"><rect x=".5" y=".5" width="7.6" height="6.6" fill="#f3e6c0" stroke="#d2b86a" stroke-width=".4"/><rect x=".5" y=".5" width="7.6" height="1.8" fill="#e06a2a"/><path d="M1.5 4 H7 M1.5 5.6 H7" stroke="#b9a060" stroke-width=".5"/></svg>
<svg style="left:331px;top:75.5px" width="9" height="9" viewBox="0 0 9 9"><rect x=".5" y=".8" width="7.4" height="7.4" fill="#f6b93a" stroke="#d88a1a" stroke-width=".5"/><rect x="2" y="2.3" width="3.8" height="3.2" fill="#fff"/><rect x="5" y="4.8" width="3.6" height="3.6" fill="#2f86c8"/></svg>
<svg style="left:343px;top:75.5px" width="9" height="9" viewBox="0 0 9 9"><rect x=".5" y=".8" width="7.6" height="7.6" fill="#35b0e0" stroke="#1b86b8" stroke-width=".5"/><rect x="1.6" y="2" width="3.5" height="3" fill="#e8f4fb"/><path d="M4.5 8.2 L8.2 4.5 V8.2Z" fill="#f2b632"/></svg>
<svg style="left:355px;top:76.5px" width="10" height="7" viewBox="0 0 10 7"><rect x=".5" y="1.5" width="4.5" height="4.5" fill="#3f7fc8"/><circle cx="4.2" cy="4.6" r="1.4" fill="#f2d040"/><rect x="5.4" y=".5" width="4" height="4" fill="#f08a2a"/><rect x="5.4" y="3.8" width="4" height="2" fill="#d9484b"/></svg>
<div class="a" style="left:368.3px;top:75px;width:0.6px;height:11px;background:#cdd0d4;"></div>
<svg style="left:372px;top:75.7px" width="9" height="9" viewBox="0 0 9 9"><circle cx="4.5" cy="4.5" r="3.6" fill="none" stroke="#7d838b" stroke-width=".7"/><path d="M4.5 2.3 V4.7 L6 5.6" stroke="#7d838b" stroke-width=".7" fill="none"/></svg>
<svg style="left:383.5px;top:76px" width="7" height="8" viewBox="0 0 7 8"><path d="M1 1 H3 M4.5 1 H6 V7" stroke="#a5aab1" stroke-width=".8" fill="none"/><rect x=".8" y="3.5" width="1" height="3" fill="#b9bdc3"/></svg>
<svg style="left:394.3px;top:77px" width="6" height="6" viewBox="0 0 6 6"><rect x=".3" y=".3" width="5.4" height="5.4" fill="#fff" stroke="#c3c7cd" stroke-width=".5"/><rect x="1.4" y="1.4" width="3.2" height="3.2" fill="#555"/></svg>
<div class="a" style="left:403.5px;top:75.3px;width:65px;height:9.6px;background:#f4f5f6;box-shadow:0 0 0 .5px #d3d6da"></div>
<div class="t" style="left:406.00px;top:76px;font-size:5.6px;color:#9b9fa6;letter-spacing:0.076px;">Normal</div>
<svg style="left:462.5px;top:79.2px" width="4" height="3" viewBox="0 0 4 3"><path d="M.5 .5 H3.3 L1.9 2.2Z" fill="#b9bdc3"/></svg>
<svg style="left:471px;top:76px" width="7" height="9" viewBox="0 0 7 9"><path d="M1 .8 L1.4 6.5 L3 5 L4 7.5 L5 7 L4 4.6 L6 4.4 Z" fill="#b4b8be"/></svg>
<svg style="left:482.5px;top:76.5px" width="8" height="8" viewBox="0 0 8 8"><circle cx="3" cy="4.5" r="2.4" fill="#b4b8be"/><circle cx="5.6" cy="3" r="2" fill="#c6c9ce"/></svg>
<svg style="left:494.5px;top:75.7px" width="9" height="9" viewBox="0 0 9 9"><circle cx="4.5" cy="4.5" r="3.6" fill="none" stroke="#b4b8be" stroke-width=".8"/><path d="M3.4 2.6 L6.4 4.5 L3.4 6.4Z" fill="#b4b8be"/></svg>
<svg style="left:506.5px;top:77px" width="9" height="6" viewBox="0 0 9 6"><circle cx="1.2" cy="2" r=".7" fill="#b4b8be"/><circle cx="3.8" cy="1.2" r=".7" fill="#b4b8be"/><circle cx="6.3" cy="2.2" r=".7" fill="#b4b8be"/><circle cx="4.6" cy="4" r=".7" fill="#b4b8be"/><circle cx="7.6" cy="4.4" r=".6" fill="#b4b8be"/></svg>
<svg style="left:519px;top:76.5px" width="9" height="8" viewBox="0 0 9 8"><path d="M.8 6.8 L8 .8" stroke="#b4b8be" stroke-width=".9"/></svg>
<svg style="left:530.5px;top:76.5px" width="9" height="8" viewBox="0 0 9 8"><path d="M.8 6.8 L8 .8" stroke="#b4b8be" stroke-width=".9"/></svg>
<svg style="left:543px;top:76px" width="9" height="9" viewBox="0 0 9 9"><circle cx="4.3" cy="4.5" r="3.5" fill="none" stroke="#b4b8be" stroke-width=".8"/><circle cx="4.3" cy="4.5" r=".7" fill="#b4b8be"/></svg>
<svg style="left:555.5px;top:76px" width="9" height="9" viewBox="0 0 9 9"><circle cx="4.3" cy="4.5" r="3.5" fill="none" stroke="#b4b8be" stroke-width=".8"/></svg>
<svg style="left:567.5px;top:76.5px" width="8" height="8" viewBox="0 0 8 8"><path d="M.6 6.5 L2.5 1 L4.5 6.5 L7 2.5" stroke="#b4b8be" stroke-width=".8" fill="none"/></svg>
<svg style="left:579px;top:77px" width="9" height="7" viewBox="0 0 9 7"><path d="M.6 5 Q2.5 -1 4.5 3 T8 2.5" stroke="#b4b8be" stroke-width=".8" fill="none"/></svg>
<svg style="left:591px;top:76.5px" width="9" height="8" viewBox="0 0 9 8"><path d="M.6 1.2 H8 M2.5 1.2 L1.2 7 M6 1.2 L7.3 7" stroke="#b4b8be" stroke-width=".8" fill="none"/></svg>
<svg style="left:603px;top:76.5px" width="9" height="8" viewBox="0 0 9 8"><path d="M.8 6.8 L7.6 1" stroke="#b4b8be" stroke-width=".9"/><path d="M5.5 .6 L8.2 .4 L7.6 3Z" fill="#b4b8be"/></svg>
<svg style="left:614px;top:77px" width="9" height="7" viewBox="0 0 9 7"><path d="M.5 3 L4 .6 L8.2 3.2 L4.6 6.4 Z" fill="#b4b8be"/></svg>
<svg style="left:626.5px;top:77px" width="9" height="7" viewBox="0 0 9 7"><path d="M.5 3 L4 .6 L8.2 3.2 L4.6 6.4 Z" fill="#b4b8be"/></svg>
<div class="a" style="left:0px;top:87.5px;width:180px;height:440px;background:#ececed;"></div>
<div class="a" style="left:16px;top:97px;width:163.5px;height:429.5px;background:#e8eaf1;"></div>
<div class="a" style="left:16px;top:97px;width:163.5px;height:17px;background:#ededee;"></div>
<div class="a" style="left:18.7px;top:124.4px;width:156.6px;height:398.4px;background:#e2e5ee;box-shadow:0 0 0 .5px #eceef4"></div>
<div class="a" style="left:18.7px;top:124.4px;width:156.6px;height:203px;background:#e9ebf3;"></div>
<div class="a" style="left:179.3px;top:87.5px;width:0.7px;height:440px;background:#d5d8dc;"></div>
<div class="t" style="left:2.00px;top:88px;font-size:5.8px;color:#2c2c2c;letter-spacing:0.172px;">Vent</div>
<svg style="left:160px;top:89.5px" width="6" height="5" viewBox="0 0 6 5"><rect x=".5" y=".8" width="4.6" height="3.4" fill="#d5d8dc" stroke="#a9adb3" stroke-width=".5"/><path d="M1.5 2 H4 M1.5 3 H4" stroke="#8d9299" stroke-width=".4"/></svg>
<svg style="left:169px;top:89px" width="7" height="6" viewBox="0 0 7 6"><path d="M.8 .8 L5.6 5 M5.6 .8 L.8 5" stroke="#a3a8af" stroke-width=".7" fill="none"/><rect x=".6" y=".6" width="5.2" height="4.6" fill="none" stroke="#b5b9bf" stroke-width=".4"/></svg>
<div class="a" style="left:0px;top:97px;width:15.5px;height:22.8px;background:#fbfbfc;box-shadow:0 0 0 .5px #d8dbe0"></div>
<svg style="left:2.5px;top:102px" width="11" height="12" viewBox="0 0 11 12"><path d="M2 4 L8.5 1 L9 8 L2.5 11 Z" fill="#1f8fc6"/><path d="M3 4.8 L7.7 2.6 L8 7.4 L3.4 9.6Z" fill="#5cc6ea"/><path d="M1 4.5 L2 4 L2.5 11 L1.5 11.5Z" fill="#146c9e"/><path d="M4 5.5 L5.3 4.9 L5.4 6.3 L4.1 6.9Z M6 4.6 L7.2 4 L7.3 5.4 L6.1 6Z M4.2 7.6 L5.5 7 L5.6 8.4 L4.3 9Z M6.2 6.7 L7.4 6.1 L7.5 7.5 L6.3 8.1Z" fill="#d8f1fb"/></svg>
<svg style="left:2px;top:125.5px" width="12" height="12" viewBox="0 0 12 12"><path d="M1 2.5 L4 1 L7 2.5 V5.5 L4 7 L1 5.5Z" fill="#6bb6e6" stroke="#2f86c8" stroke-width=".5"/><path d="M4 6.5 V10 H8 M6 6 H11" stroke="#7d838b" stroke-width=".6" fill="none"/><rect x="8" y="8.3" width="3" height="3" fill="#fff" stroke="#7d838b" stroke-width=".5"/></svg>
<svg style="left:2.5px;top:150px" width="11" height="13" viewBox="0 0 11 13"><rect x=".5" y=".8" width="10" height="11.4" fill="#d5eaf7" stroke="#2f9bd8" stroke-width=".7"/><rect x=".5" y=".8" width="10" height="2" fill="#2f9bd8"/><path d="M2.5 6 L5.5 4.5 L8.5 6 V9 L5.5 10.5 L2.5 9Z" fill="#f6c520" stroke="#e0901a" stroke-width=".5"/><path d="M2.5 6 L5.5 7.5 L8.5 6 M5.5 7.5 V10.5" stroke="#e0901a" stroke-width=".4" fill="none"/></svg>
<svg style="left:2px;top:175px" width="12" height="12" viewBox="0 0 12 12"><rect x=".5" y=".5" width="11" height="10.5" fill="#7fc4ee" stroke="#2f86c8" stroke-width=".6"/><circle cx="8" cy="4" r="2" fill="#fff6c8"/><path d="M.5 9 L4 5.5 L7 8.5 L9 7 L11.5 9.5 V11 H.5Z" fill="#3f9bd8"/><rect x="1.5" y="6.8" width="4.5" height="2.2" fill="#e8483a"/></svg>
<svg style="left:2.5px;top:197px" width="11" height="12" viewBox="0 0 11 12"><circle cx="5" cy="3.2" r="2.5" fill="#f2b632"/><path d="M.8 10.5 Q1 6 5 6 Q9 6 9.2 10.5Z" fill="#2f86c8"/><path d="M6 6.5 L10.5 9 L7.5 10.2Z" fill="#e8961e"/></svg>
<div class="a" style="left:18.7px;top:99px;width:12.7px;height:11.3px;background:#fbfbfc;box-shadow:0 0 0 .5px #dfe2e7"></div>
<div class="a" style="left:33.7px;top:99px;width:12.7px;height:11.3px;background:#fbfbfc;box-shadow:0 0 0 .5px #dfe2e7"></div>
<div class="a" style="left:48.4px;top:99px;width:12.7px;height:11.3px;background:#fbfbfc;box-shadow:0 0 0 .5px #dfe2e7"></div>
<svg style="left:20.5px;top:101px" width="9" height="8" viewBox="0 0 9 8"><path d="M1 4 L3.5 6.6 L8 1.2" stroke="#22a53a" stroke-width="1.7" fill="none"/></svg>
<svg style="left:36px;top:101px" width="8" height="8" viewBox="0 0 8 8"><path d="M1 1 L7 7 M7 1 L1 7" stroke="#e0242c" stroke-width="1.7" fill="none"/></svg>
<svg style="left:50.5px;top:100.5px" width="9" height="9" viewBox="0 0 9 9"><rect x="1" y="2" width="6.5" height="6.3" fill="#fff" stroke="#cf2430" stroke-width="1.3"/><path d="M2.6 4.6 L4.2 6.4 L8 1.2" stroke="#22a53a" stroke-width="1.3" fill="none"/></svg>
<div class="a" style="left:153.8px;top:99px;width:12.7px;height:11.3px;background:#fbfbfc;box-shadow:0 0 0 .5px #dfe2e7"></div>
<div class="a" style="left:168.4px;top:99px;width:6.9px;height:11.3px;background:#fbfbfc;box-shadow:0 0 0 .5px #dfe2e7"></div>
<svg style="left:156.2px;top:100.7px" width="8" height="8" viewBox="0 0 8 8"><circle cx="4" cy="4" r="3.6" fill="#1f55b8"/><rect x="3.4" y="3.3" width="1.3" height="3" fill="#fff"/><circle cx="4" cy="2" r=".75" fill="#fff"/></svg>
<svg style="left:170px;top:101px" width="5" height="8" viewBox="0 0 5 8"><path d="M.8 .6 V7.4 H3.8" stroke="#2f9bd8" stroke-width=".8" fill="none"/><path d="M1.5 .6 H3.5 V4 H1.5" fill="#f2a93a"/></svg>
<div class="a" style="left:18.7px;top:114px;width:156.6px;height:10.4px;background:#fbfbfc;"></div>
<div class="a" style="left:18.7px;top:260.5px;width:156.6px;height:10.4px;background:#fbfbfc;"></div>
<svg style="left:20.8px;top:117.5px" width="5" height="4" viewBox="0 0 5 4"><path d="M.3 .4 H4.3 L2.3 3.6Z" fill="#333"/></svg>
<svg style="left:20.8px;top:264px" width="5" height="4" viewBox="0 0 5 4"><path d="M.3 .4 H4.3 L2.3 3.6Z" fill="#333"/></svg>
<div class="t" style="left:28.00px;top:115px;font-size:5.8px;color:#2e2e2e;letter-spacing:0.046px;font-weight:bold;">Required</div>
<div class="t" style="left:28.00px;top:262px;font-size:5.8px;color:#2e2e2e;letter-spacing:0.078px;font-weight:bold;">Settings</div>
<div class="t" style="left:23.00px;top:129px;font-size:5.3px;color:#262626;letter-spacing:-0.070px;">Face</div>
<div class="a" style="left:73.7px;top:128.29999999999998px;width:79.7px;height:9.8px;background:#fff;box-shadow:0 0 0 .5px #dfe2e8"></div>
<div class="t" style="left:75.50px;top:129px;font-size:5.12px;color:#555;letter-spacing:-0.003px;">F3237</div>
<div class="a" style="left:154.6px;top:128.2px;width:3.4px;height:10px;background:#28e0f0;box-shadow:0 0 0 .5px #c3c7ce"></div>
<svg style="left:160.5px;top:128.7px" width="8" height="9" viewBox="0 0 8 9"><g opacity=".72"><path d="M4 .6 L6.6 4 H5 V6 H3 V4 H1.4Z" fill="#3bb54a" opacity=".85"/><path d="M1 6.6 H7 V8 H1Z" fill="#e6c020" opacity=".8"/><path d="M2.5 5.8 H5.5" stroke="#3bb54a" stroke-width=".5"/></g></svg>
<div class="t" style="left:23.00px;top:142px;font-size:5.7px;color:#262626;letter-spacing:0.082px;">Sketch boundary</div>
<div class="a" style="left:73.7px;top:141.1px;width:67.89999999999999px;height:9.8px;background:#fff;box-shadow:0 0 0 .5px #dfe2e8"></div>
<div class="t" style="left:75.50px;top:142px;font-size:5.5px;color:#444;letter-spacing:0.127px;">1 picked</div>
<svg style="left:145px;top:142.5px" width="6" height="7" viewBox="0 0 6 7"><path d="M.8 .8 L3 2.8 L5.2 .8 M.8 3.8 L3 5.8 L5.2 3.8" stroke="#555" stroke-width=".8" fill="none"/></svg>
<div class="a" style="left:154.6px;top:141px;width:3.4px;height:10px;background:#f08ae0;box-shadow:0 0 0 .5px #c3c7ce"></div>
<svg style="left:160.5px;top:141.5px" width="8" height="9" viewBox="0 0 8 9"><g opacity=".72"><path d="M4 .6 L6.6 4 H5 V6 H3 V4 H1.4Z" fill="#e0404a" opacity=".85"/><path d="M1 6.6 H7 V8 H1Z" fill="#e6a0a0" opacity=".8"/><path d="M2.5 5.8 H5.5" stroke="#e0404a" stroke-width=".5"/></g></svg>
<div class="t" style="left:23.00px;top:155px;font-size:5.7px;color:#262626;letter-spacing:0.058px;">Depth</div>
<div class="a" style="left:73.7px;top:153.9px;width:77.3px;height:9.8px;background:#fff;box-shadow:0 0 0 .5px #dfe2e8"></div>
<div class="t" style="left:75.50px;top:155px;font-size:5.12px;color:#555;letter-spacing:-0.039px;">0.5</div>
<div class="t" style="left:132.00px;top:155px;font-size:5.6px;color:#555;letter-spacing:0.585px;">mm</div>
<svg style="left:145px;top:154.8px" width="4" height="8" viewBox="0 0 4 8"><path d="M.6 2.8 L2 1 L3.4 2.8Z M.6 5.2 L2 7 L3.4 5.2Z" fill="#444"/></svg>
<svg style="left:153.5px;top:154.3px" width="8" height="9" viewBox="0 0 8 9"><g opacity=".72"><path d="M4 .6 L6.6 4 H5 V6 H3 V4 H1.4Z" fill="#3bb54a" opacity=".85"/><path d="M1 6.6 H7 V8 H1Z" fill="#e6c020" opacity=".8"/><path d="M2.5 5.8 H5.5" stroke="#3bb54a" stroke-width=".5"/></g></svg>
<svg style="left:164px;top:157.3px" width="4" height="3" viewBox="0 0 4 3"><path d="M.2 .3 H3.8 L2 2.7Z" fill="#333"/></svg>
<div class="a" style="left:22.6px;top:167.2px;width:148px;height:63px;background:#eef1f8;box-shadow:0 0 0 .7px #6ab4e6;border-radius:1px"></div>
<div class="a" style="left:25.3px;top:173.7px;width:143.2px;height:51.6px;background:transparent;box-shadow:0 0 0 .5px #d3d6dc"></div>
<div class="a" style="left:28px;top:170.5px;width:13px;height:6px;background:#eef1f8;"></div>
<div class="t" style="left:29.20px;top:169px;font-size:5.6px;color:#444;letter-spacing:-0.151px;">Ribs</div>
<div class="t" style="left:29.50px;top:184px;font-size:5.7px;color:#262626;letter-spacing:0.083px;">Ribs profile</div>
<div class="a" style="left:75.5px;top:183.4px;width:58.5px;height:9.8px;background:#fff;box-shadow:0 0 0 .5px #dfe2e8"></div>
<div class="t" style="left:77.30px;top:184px;font-size:5.5px;color:#444;letter-spacing:0.089px;">4 picked</div>
<svg style="left:137.5px;top:184.8px" width="6" height="7" viewBox="0 0 6 7"><path d="M.8 .8 L3 2.8 L5.2 .8 M.8 3.8 L3 5.8 L5.2 3.8" stroke="#555" stroke-width=".8" fill="none"/></svg>
<div class="a" style="left:147.79999999999998px;top:183.3px;width:3.4px;height:10px;background:#f2b81a;box-shadow:0 0 0 .5px #c3c7ce"></div>
<svg style="left:153.3px;top:183.8px" width="8" height="9" viewBox="0 0 8 9"><g opacity=".72"><path d="M4 .6 L6.6 4 H5 V6 H3 V4 H1.4Z" fill="#3bb54a" opacity=".85"/><path d="M1 6.6 H7 V8 H1Z" fill="#e6c020" opacity=".8"/><path d="M2.5 5.8 H5.5" stroke="#3bb54a" stroke-width=".5"/></g></svg>
<div class="t" style="left:29.50px;top:197px;font-size:5.7px;color:#262626;letter-spacing:0.086px;">Width</div>
<div class="a" style="left:75.5px;top:196.1px;width:68.5px;height:10.6px;background:#fff;box-shadow:0 0 0 .5px #3f9be0"></div>
<div class="a" style="left:77.6px;top:197.6px;width:2.6px;height:7.6px;background:#2f7fe0;"></div>
<div class="t" style="left:124.80px;top:197px;font-size:5.6px;color:#444;letter-spacing:0.585px;">mm</div>
<svg style="left:138.3px;top:197.4px" width="4" height="8" viewBox="0 0 4 8"><path d="M.6 2.8 L2 1 L3.4 2.8Z M.6 5.2 L2 7 L3.4 5.2Z" fill="#444"/></svg>
<svg style="left:146.7px;top:196.9px" width="8" height="9" viewBox="0 0 8 9"><g opacity=".72"><path d="M4 .6 L6.6 4 H5 V6 H3 V4 H1.4Z" fill="#e0404a" opacity=".85"/><path d="M1 6.6 H7 V8 H1Z" fill="#e6a0a0" opacity=".8"/><path d="M2.5 5.8 H5.5" stroke="#e0404a" stroke-width=".5"/></g></svg>
<svg style="left:157px;top:199.9px" width="4" height="3" viewBox="0 0 4 3"><path d="M.2 .3 H3.8 L2 2.7Z" fill="#333"/></svg>
<div class="a" style="left:136.8px;top:196.4px;width:0.5px;height:10px;background:#dfe2e8;"></div>
<svg style="left:71.8px;top:196.5px" width="4" height="10" viewBox="0 0 4 10"><path d="M.5 .5 H3.5 M2 .5 V9.5 M.5 9.5 H3.5" stroke="#333" stroke-width=".7" fill="none"/></svg>
<div class="t" style="left:29.50px;top:211px;font-size:5.7px;color:#262626;letter-spacing:0.038px;">Thickness</div>
<div class="a" style="left:75.5px;top:209.79999999999998px;width:68.5px;height:9.8px;background:#fff;box-shadow:0 0 0 .5px #dfe2e8"></div>
<div class="t" style="left:77.30px;top:211px;font-size:5.12px;color:#555;letter-spacing:-0.039px;">0.5</div>
<div class="t" style="left:124.80px;top:211px;font-size:5.6px;color:#555;letter-spacing:0.585px;">mm</div>
<svg style="left:138.3px;top:210.7px" width="4" height="8" viewBox="0 0 4 8"><path d="M.6 2.8 L2 1 L3.4 2.8Z M.6 5.2 L2 7 L3.4 5.2Z" fill="#444"/></svg>
<svg style="left:146.7px;top:210.2px" width="8" height="9" viewBox="0 0 8 9"><g opacity=".72"><path d="M4 .6 L6.6 4 H5 V6 H3 V4 H1.4Z" fill="#e0404a" opacity=".85"/><path d="M1 6.6 H7 V8 H1Z" fill="#e6a0a0" opacity=".8"/><path d="M2.5 5.8 H5.5" stroke="#e0404a" stroke-width=".5"/></g></svg>
<svg style="left:157px;top:213.2px" width="4" height="3" viewBox="0 0 4 3"><path d="M.2 .3 H3.8 L2 2.7Z" fill="#333"/></svg>
<svg style="left:25.6px;top:229.8px" width="8" height="4" viewBox="0 0 8 4"><path d="M.5 .3 L4 3.5 L7.5 .3" fill="#eef1f8" stroke="#6ab4e6" stroke-width=".6"/></svg>
<div class="t" style="left:23.00px;top:236px;font-size:5.7px;color:#262626;letter-spacing:0.158px;">List</div>
<div class="a" style="left:73.4px;top:234.9px;width:60.599999999999994px;height:9.8px;background:#fff;box-shadow:0 0 0 .5px #dfe2e8"></div>
<svg style="left:137.7px;top:236.3px" width="6" height="7" viewBox="0 0 6 7"><path d="M.8 .8 L3 2.8 L5.2 .8 M.8 3.8 L3 5.8 L5.2 3.8" stroke="#555" stroke-width=".8" fill="none"/></svg>
<svg style="left:148.5px;top:236.3px" width="7" height="7" viewBox="0 0 7 7"><path d="M3.5 .5 V4 M2 2.8 L3.5 4.4 L5 2.8 M.8 3.8 V6.2 H6.2 V3.8" stroke="#555" stroke-width=".7" fill="none"/></svg>
<svg style="left:160.8px;top:235.3px" width="8" height="9" viewBox="0 0 8 9"><g opacity=".72"><path d="M4 .6 L6.6 4 H5 V6 H3 V4 H1.4Z" fill="#d8b020" opacity=".85"/><path d="M1 6.6 H7 V8 H1Z" fill="#e6c020" opacity=".8"/><path d="M2.5 5.8 H5.5" stroke="#d8b020" stroke-width=".5"/></g></svg>
<div class="a" style="left:23.5px;top:248.8px;width:5.6px;height:5.6px;background:#e6e8ec;box-shadow:0 0 0 .5px #aeb3ba"></div>
<div class="t" style="left:32.00px;top:248px;font-size:5.7px;color:#262626;letter-spacing:0.086px;">Opposite</div>
<div class="t" style="left:23.00px;top:275px;font-size:5.7px;color:#262626;letter-spacing:0.105px;">Fill boundary</div>
<div class="a" style="left:73.4px;top:274.40000000000003px;width:68.1px;height:9.8px;background:#fff;box-shadow:0 0 0 .5px #dfe2e8"></div>
<svg style="left:145px;top:275.8px" width="6" height="7" viewBox="0 0 6 7"><path d="M.8 .8 L3 2.8 L5.2 .8 M.8 3.8 L3 5.8 L5.2 3.8" stroke="#555" stroke-width=".8" fill="none"/></svg>
<div class="a" style="left:154.6px;top:274.3px;width:3.4px;height:10px;background:#1fe01f;box-shadow:0 0 0 .5px #c3c7ce"></div>
<svg style="left:160.8px;top:274.8px" width="8" height="9" viewBox="0 0 8 9"><g opacity=".72"><path d="M4 .6 L6.6 4 H5 V6 H3 V4 H1.4Z" fill="#d8b020" opacity=".85"/><path d="M1 6.6 H7 V8 H1Z" fill="#e6c020" opacity=".8"/><path d="M2.5 5.8 H5.5" stroke="#d8b020" stroke-width=".5"/></g></svg>
<div class="t" style="left:23.00px;top:288px;font-size:5.7px;color:#262626;letter-spacing:0.237px;">Fill depth</div>
<div class="a" style="left:73.4px;top:287.6px;width:77.6px;height:9.8px;background:#fff;box-shadow:0 0 0 .5px #dfe2e8"></div>
<div class="t" style="left:75.30px;top:288px;font-size:5.12px;color:#555;letter-spacing:-0.039px;">0.5</div>
<div class="t" style="left:131.80px;top:288px;font-size:5.6px;color:#555;letter-spacing:0.585px;">mm</div>
<svg style="left:145px;top:288.5px" width="4" height="8" viewBox="0 0 4 8"><path d="M.6 2.8 L2 1 L3.4 2.8Z M.6 5.2 L2 7 L3.4 5.2Z" fill="#444"/></svg>
<svg style="left:153.3px;top:288.0px" width="8" height="9" viewBox="0 0 8 9"><g opacity=".72"><path d="M4 .6 L6.6 4 H5 V6 H3 V4 H1.4Z" fill="#3bb54a" opacity=".85"/><path d="M1 6.6 H7 V8 H1Z" fill="#e6c020" opacity=".8"/><path d="M2.5 5.8 H5.5" stroke="#3bb54a" stroke-width=".5"/></g></svg>
<svg style="left:164px;top:291.0px" width="4" height="3" viewBox="0 0 4 3"><path d="M.2 .3 H3.8 L2 2.7Z" fill="#333"/></svg>
<div class="t" style="left:23.00px;top:302px;font-size:5.7px;color:#262626;letter-spacing:0.066px;">Fillet radius</div>
<div class="a" style="left:73.4px;top:301.0px;width:77.6px;height:9.8px;background:#fff;box-shadow:0 0 0 .5px #dfe2e8"></div>
<div class="t" style="left:75.30px;top:302px;font-size:5.5px;color:#555;">0</div>
<div class="t" style="left:131.80px;top:302px;font-size:5.6px;color:#555;letter-spacing:0.585px;">mm</div>
<svg style="left:145px;top:301.9px" width="4" height="8" viewBox="0 0 4 8"><path d="M.6 2.8 L2 1 L3.4 2.8Z M.6 5.2 L2 7 L3.4 5.2Z" fill="#444"/></svg>
<svg style="left:153.3px;top:301.4px" width="8" height="9" viewBox="0 0 8 9"><g opacity=".72"><path d="M4 .6 L6.6 4 H5 V6 H3 V4 H1.4Z" fill="#3bb54a" opacity=".85"/><path d="M1 6.6 H7 V8 H1Z" fill="#e6c020" opacity=".8"/><path d="M2.5 5.8 H5.5" stroke="#3bb54a" stroke-width=".5"/></g></svg>
<svg style="left:164px;top:304.4px" width="4" height="3" viewBox="0 0 4 3"><path d="M.2 .3 H3.8 L2 2.7Z" fill="#333"/></svg>
<div class="t" style="left:23.00px;top:315px;font-size:5.7px;color:#262626;letter-spacing:0.011px;">Draft angle</div>
<div class="a" style="left:73.4px;top:314.3px;width:77.6px;height:9.8px;background:#fff;box-shadow:0 0 0 .5px #dfe2e8"></div>
<div class="t" style="left:75.30px;top:315px;font-size:5.5px;color:#555;">0</div>
<div class="t" style="left:132.50px;top:315px;font-size:5.6px;color:#555;letter-spacing:0.153px;">deg</div>
<svg style="left:145px;top:315.2px" width="4" height="8" viewBox="0 0 4 8"><path d="M.6 2.8 L2 1 L3.4 2.8Z M.6 5.2 L2 7 L3.4 5.2Z" fill="#444"/></svg>
<svg style="left:153.3px;top:314.7px" width="8" height="9" viewBox="0 0 8 9"><g opacity=".72"><path d="M4 .6 L6.6 4 H5 V6 H3 V4 H1.4Z" fill="#3bb54a" opacity=".85"/><path d="M1 6.6 H7 V8 H1Z" fill="#e6c020" opacity=".8"/><path d="M2.5 5.8 H5.5" stroke="#3bb54a" stroke-width=".5"/></g></svg>
<svg style="left:164px;top:317.7px" width="4" height="3" viewBox="0 0 4 3"><path d="M.2 .3 H3.8 L2 2.7Z" fill="#333"/></svg>
<div class="a" style="left:180px;top:87.5px;width:780px;height:10.5px;background:#ececed;"></div>
<div class="a" style="left:181px;top:87.5px;width:65px;height:10.5px;background:#ffffff;"></div>
<div class="t" style="left:196.50px;top:89px;font-size:5.6px;color:#333;letter-spacing:-0.136px;">* Vent.Z3PRT</div>
<svg style="left:233px;top:90px" width="6" height="6" viewBox="0 0 6 6"><path d="M1 1 L5 5 M5 1 L1 5" stroke="#8d7b35" stroke-width=".85"/></svg>
<svg style="left:248.5px;top:89.5px" width="6" height="6" viewBox="0 0 6 6"><path d="M3 .8 V5.2 M.8 3 H5.2" stroke="#9a9fa6" stroke-width=".7"/></svg>
<div class="a" style="left:180px;top:98px;width:780px;height:429px;background:#ffffff;"></div>
<div class="a" style="left:957.3px;top:98px;width:0.8px;height:429px;background:#f1f1f2;"></div>
<div class="t" style="left:191.00px;top:99px;font-size:4.2px;color:#444;letter-spacing:0.151px;">&lt;right-click&gt; for numeric input options.</div>
<div class="t" style="left:191.00px;top:105px;font-size:4.2px;color:#444;letter-spacing:0.152px;">&lt;right-click&gt; for entity input options.</div>
<div class="a" style="left:0px;top:527px;width:960px;height:13px;background:#ececed;"></div>
<div class="a" style="left:0px;top:526.6px;width:960px;height:0.7px;background:#d9dce0;"></div>
<div class="t" style="left:3.00px;top:530px;font-size:6.0px;color:#333;letter-spacing:0.028px;white-space:pre;">Specify ribs width.  &lt;middle-click&gt; when done.</div>
<div class="a" style="left:733px;top:529px;width:0.6px;height:10px;background:#cdd0d4;"></div>
<div class="a" style="left:737px;top:528.5px;width:11.5px;height:11px;background:#fbd96a;box-shadow:0 0 0 .5px #e8b93a"></div>
<svg style="left:739px;top:530px" width="8" height="8" viewBox="0 0 8 8"><rect x=".5" y=".8" width="6.6" height="6.4" fill="#fff" stroke="#3a4a8a" stroke-width=".7"/><path d="M2.6 .8 V7.2 M.5 2.6 H7" stroke="#3a4a8a" stroke-width=".6"/><rect x="3.6" y="3.6" width="2" height="2.6" fill="#d9242b"/></svg>
<svg style="left:753.5px;top:530.5px" width="9" height="8" viewBox="0 0 9 8"><rect x=".5" y=".5" width="8" height="5" rx=".5" fill="#2fb0e0" stroke="#1b6f9a" stroke-width=".5"/><rect x="2.8" y="5.8" width="3.4" height="1.2" fill="#444"/></svg>
<svg style="left:769.5px;top:530px" width="8" height="8" viewBox="0 0 8 8"><rect x=".5" y=".8" width="6.6" height="6.4" fill="#eef4fb" stroke="#5b8fc4" stroke-width=".7"/><rect x=".5" y=".8" width="6.6" height="1.6" fill="#5b8fc4"/><path d="M1.6 4 H6 M1.6 5.6 H6" stroke="#9bb8d8" stroke-width=".5"/></svg>
<div class="a" style="left:784px;top:529.3px;width:173px;height:10.7px;background:#fff;box-shadow:0 0 0 .5px #d3d6da"></div>
<svg style="left:954px;top:535px" width="5" height="5" viewBox="0 0 5 5"><path d="M4.6 1 L1 4.6 M4.6 3 L3 4.6" stroke="#8d9299" stroke-width=".6"/></svg>
<svg style="left:948.5px;top:90.5px" width="6" height="5" viewBox="0 0 6 5"><path d="M.5 .6 H5 M1 2 H4.5 L2.75 4.3Z" stroke="#9a9fa6" stroke-width=".5" fill="#9a9fa6"/></svg>
<div class="a" style="left:958px;top:0px;width:2px;height:540px;background:#f8f8f8;"></div>
<svg style="left:0;top:0" width="960" height="540" viewBox="0 0 960 540"><defs><clipPath id="vp"><rect x="180" y="98" width="778" height="429"/></clipPath><clipPath id="hole"><ellipse cx="521.7" cy="238" rx="99" ry="51.7"/></clipPath><linearGradient id="gw" x1="0" y1="0" x2="0" y2="1"><stop offset="0" stop-color="#c4c1ba"/><stop offset="1" stop-color="#c8c5be"/></linearGradient></defs><g clip-path="url(#vp)" stroke-linejoin="round"><polygon points="334.5,262 505,150 505,308 474.5,327.4 458,338 456,341 420,363 418,366 363,400 333,418" fill="#c5c2bb"/><path d="M348 315 L490 230 Q496 227.5 496 237 L496 252 Q496 257 490 258 L353 343 Q331 331 348 315Z" fill="#c2bfb8" stroke="#3f3f3d" stroke-width=".6"/><path d="M349 317.6 L489 232.8 Q493.6 231 493.6 239" stroke="#f3f2ee" stroke-width="4" fill="none"/><path d="M349 317.6 L489 232.8 Q493.6 231 493.6 239" stroke="#8d8b86" stroke-width=".45" fill="none"/><path d="M350 320.2 L488 235.4 Q491.2 234.5 491.2 240" stroke="#3f3f3d" stroke-width=".5" fill="none"/><path d="M349 317.4 Q334.4 328 354 340.4" stroke="#e6e4de" stroke-width="3.2" fill="none"/><path d="M350 320 Q338 329 355 337.6" stroke="#3f3f3d" stroke-width=".45" fill="none" opacity=".8"/><path d="M350 360 L489 274.5 Q495 272.0 495 281.5 L495 297 Q495 302 489 303 L355 388 Q331 378 350 360Z" fill="#c2bfb8" stroke="#3f3f3d" stroke-width=".6"/><path d="M351 362.6 L488 277.3 Q492.6 275.5 492.6 283.5" stroke="#f3f2ee" stroke-width="4" fill="none"/><path d="M351 362.6 L488 277.3 Q492.6 275.5 492.6 283.5" stroke="#8d8b86" stroke-width=".45" fill="none"/><path d="M352 365.2 L487 279.9 Q490.2 279.0 490.2 284.5" stroke="#3f3f3d" stroke-width=".5" fill="none"/><path d="M351 362.4 Q334.4 375 356 385.4" stroke="#e6e4de" stroke-width="3.2" fill="none"/><path d="M352 365 Q338 376 357 382.6" stroke="#3f3f3d" stroke-width=".45" fill="none" opacity=".8"/><line x1="362" y1="349.5" x2="466" y2="285" stroke="#3f3f3d" stroke-width=".55"/><ellipse cx="357.3" cy="326.7" rx="2" ry="2.8" transform="rotate(25 357.3 326.7)" fill="#fff" stroke="#3f3f3d" stroke-width=".65"/><ellipse cx="356.8" cy="371.8" rx="2" ry="2.8" transform="rotate(25 356.8 371.8)" fill="#fff" stroke="#3f3f3d" stroke-width=".65"/><ellipse cx="483.8" cy="249" rx="2" ry="2.8" transform="rotate(25 483.8 249)" fill="#fff" stroke="#3f3f3d" stroke-width=".65"/><polyline points="333,418 363,400 418,366 420,363 456,341 458,338 474.5,327.4" fill="none" stroke="#3f3f3d" stroke-width=".65"/><polygon points="304,417.5 321.8,406.6 322.5,424.5 321,425.5" fill="#efede6" stroke="#3f3f3d" stroke-width=".65"/><ellipse cx="318.7" cy="416" rx="2.2" ry="1.5" fill="#fff" stroke="#3f3f3d" stroke-width=".55"/><polygon points="324.6,250.5 334.8,262 332.8,430.5 330,430 322.4,424" fill="#d3d0ca" stroke="#3f3f3d" stroke-width=".65"/><line x1="326" y1="254" x2="324" y2="425" stroke="#bdbab4" stroke-width=".6"/><path d="M507.5 136 L509.3 125.5 Q511.5 116.5 523 117.3 L700 196.2 Q718.8 204.5 719.3 215 L719.3 231 L714.5 229Z" fill="#c6c3bc" stroke="#3f3f3d" stroke-width=".65"/><path d="M511 120.5 Q515 116.8 523 117.3 L700 196.2 Q716.5 203.5 718.8 213" fill="none" stroke="#5e5c57" stroke-width="1.05"/><line x1="507.5" y1="134.6" x2="716" y2="227.8" stroke="#f4f3ef" stroke-width="2.4"/><ellipse cx="543" cy="137.4" rx="2.6" ry="3.3" transform="rotate(-25 543 137.4)" fill="#fff" stroke="#3f3f3d" stroke-width=".6"/><ellipse cx="685" cy="200" rx="2.6" ry="3.3" transform="rotate(-25 685 200)" fill="#fff" stroke="#3f3f3d" stroke-width=".6"/><polygon points="539.5,343 716,233 720,232 720.3,409 536,520 536.5,345" fill="url(#gw)" stroke="#3f3f3d" stroke-width=".65"/><line x1="537.3" y1="342.6" x2="716.5" y2="231.60000000000002" stroke="#e9e7e2" stroke-width="3"/><line x1="539.3" y1="344.40000000000003" x2="719" y2="232.8" stroke="#3f3f3d" stroke-width=".55"/><polygon points="525,351 534.5,345 529,521 522,524" fill="#d8d5cf" stroke="#3f3f3d" stroke-width=".65"/><polygon points="534.5,345 536,342 540,344.5 535.8,521 529,521" fill="#e0ded8" stroke="#3f3f3d" stroke-width=".55"/><polygon points="720.3,409 733.5,418.5 548,530 536.5,530 535.8,520" fill="#efede6" stroke="#3f3f3d" stroke-width=".65"/><line x1="536" y1="520" x2="720.3" y2="409" stroke="#f3f2ee" stroke-width="2"/><line x1="537" y1="517.6" x2="720.3" y2="407.4" stroke="#3f3f3d" stroke-width=".55"/><ellipse cx="716.7" cy="420.7" rx="3.6" ry="2.1" fill="#fff" stroke="#3f3f3d" stroke-width=".65"/><ellipse cx="555" cy="521.7" rx="3.6" ry="2.1" fill="#fff" stroke="#3f3f3d" stroke-width=".65"/><path d="M559.5 409 L696.5 323 Q707.5 322 707.5 334.75 Q707.5 349.5 698.5 352.5 L560.5 440 Q550.5 443 551.5 426.5 Q551.5 412 559.5 409Z" fill="#cbc8c2" stroke="#3f3f3d" stroke-width=".65"/><path d="M557.5 437.4 L697.5 349.9 Q704.5 347.5 705.0 334.75 Q705.0 326 700.5 325" fill="none" stroke="#edebe6" stroke-width="2.6"/><path d="M558.5 435 L696.5 347.3 Q702.0 344.5 702.3 334.75 Q702.0 328 698.5 326" fill="none" stroke="#3f3f3d" stroke-width=".55"/><ellipse cx="562" cy="419" rx="2.1" ry="2.9" transform="rotate(25 562 419)" fill="#fff" stroke="#3f3f3d" stroke-width=".65"/><ellipse cx="689" cy="340.5" rx="2.1" ry="2.9" transform="rotate(25 689 340.5)" fill="#fff" stroke="#3f3f3d" stroke-width=".65"/><path d="M559 454 L696.5 369 Q707.5 368 707.5 380.25 Q707.5 394.5 698.5 397.5 L560 487 Q550 490 551 472.5 Q551 457 559 454Z" fill="#cbc8c2" stroke="#3f3f3d" stroke-width=".65"/><path d="M557 484.4 L697.5 394.9 Q704.5 392.5 705.0 380.25 Q705.0 372 700.5 371" fill="none" stroke="#edebe6" stroke-width="2.6"/><path d="M558 482 L696.5 392.3 Q702.0 389.5 702.3 380.25 Q702.0 374 698.5 372" fill="none" stroke="#3f3f3d" stroke-width=".55"/><ellipse cx="561.7" cy="464" rx="2.1" ry="2.9" transform="rotate(25 561.7 464)" fill="#fff" stroke="#3f3f3d" stroke-width=".65"/><ellipse cx="688" cy="385.7" rx="2.1" ry="2.9" transform="rotate(25 688 385.7)" fill="#fff" stroke="#3f3f3d" stroke-width=".65"/><path d="M566.5 327.5 L566.5 349 Q567.0 359.5 576.75 356.5 Q589 349 589 317" fill="none" stroke="#3f3f3d" stroke-width=".65"/><path d="M569.0 351.8 Q584 353 586.6 335" fill="none" stroke="#efede8" stroke-width="2.6"/><path d="M583.7 320 L583.7 335 Q582.7 348 569.5 349" fill="none" stroke="#3f3f3d" stroke-width=".55"/><path d="M583.7 335 L589 334" fill="none" stroke="#3f3f3d" stroke-width=".4"/><ellipse cx="573.7" cy="340.5" rx="2.1" ry="2.9" transform="rotate(25 573.7 340.5)" fill="#fff" stroke="#3f3f3d" stroke-width=".55"/><path d="M683.3 255.5 L683.3 278 Q683.8 288.5 693.3 285.5 Q705.3 278 705.3 245" fill="none" stroke="#3f3f3d" stroke-width=".65"/><path d="M685.8 280.8 Q700.3 282 702.9 263" fill="none" stroke="#efede8" stroke-width="2.6"/><path d="M700.0 248 L700.0 263 Q699.0 277 686.3 278" fill="none" stroke="#3f3f3d" stroke-width=".55"/><path d="M700.0 263 L705.3 262" fill="none" stroke="#3f3f3d" stroke-width=".4"/><ellipse cx="690.5" cy="268" rx="2.1" ry="2.9" transform="rotate(25 690.5 268)" fill="#fff" stroke="#3f3f3d" stroke-width=".55"/><polygon points="326.3,248.8 535.8,341.8 534.5,345 525,351 335,265.5" fill="#d6d3cd" stroke="#3f3f3d" stroke-width=".65"/><line x1="328.3" y1="249.70000000000002" x2="535.8" y2="343.5" stroke="#f6f5f2" stroke-width="4.2"/><line x1="327.3" y1="252.4" x2="532.8" y2="346.40000000000003" stroke="#8a8883" stroke-width=".55"/><path d="M328.3 246.8 L326 249 L325 253 L335 265.5" fill="#dddad4" stroke="#3f3f3d" stroke-width=".55"/><path fill-rule="evenodd" d="M328.3 246.8 L506.8 136.8 L715 229.8 L535.8 340.8Z M422.7 238 a99 51.7 0 1 0 198 0 a99 51.7 0 1 0 -198 0Z" fill="#b6daff"/><polygon points="328.3,246.8 506.8,136.8 715,229.8 535.8,340.8" fill="none" stroke="#19e6f2" stroke-width="1.9"/><ellipse cx="521.7" cy="238" rx="99" ry="51.7" fill="none" stroke="#e878dc" stroke-width="1.4"/><path d="M424.5 228 A99 51.7 0 0 1 618 226" fill="none" stroke="#4a7de0" stroke-width="1.8"/><g clip-path="url(#hole)"><line x1="504.8" y1="180" x2="504.8" y2="295" stroke="#6b6964" stroke-width=".6"/></g><ellipse cx="522" cy="238.5" rx="63" ry="33.4" fill="none" stroke="#333" stroke-width=".75"/><ellipse cx="522" cy="238.5" rx="24" ry="12.6" fill="none" stroke="#333" stroke-width=".75"/><line x1="444.8" y1="205.1" x2="595.6" y2="272.7" stroke="#2f8fe0" stroke-width="1.9"/><line x1="445.6" y1="203.3" x2="596.4" y2="270.9" stroke="#d8b42a" stroke-width="1.8"/><line x1="511.5" y1="186.9" x2="530.6" y2="289.9" stroke="#2f8fe0" stroke-width="1.9"/><line x1="513.3" y1="186.5" x2="532.4" y2="289.5" stroke="#d8b42a" stroke-width="1.8"/><line x1="585.0" y1="201.0" x2="460.3" y2="276.7" stroke="#2f8fe0" stroke-width="1.9"/><line x1="584.0" y1="199.4" x2="459.3" y2="275.1" stroke="#d8b42a" stroke-width="1.8"/><line x1="620.0" y1="235.8" x2="424.0" y2="242.5" stroke="#2f8fe0" stroke-width="1.9"/><line x1="620.0" y1="234.0" x2="424.0" y2="240.7" stroke="#d8b42a" stroke-width="1.8"/><circle cx="522" cy="237.8" r="1.6" fill="#f2b81a"/><rect x="322" y="408.5" width="316" height="49.5" rx="4" fill="#ffffff" opacity=".06"/><g fill="#f0f0f0"><path d="M472 417.5 L485 424 L472 430.5Z"/><path d="M459 420 L452 424 L459 428Z M465 420 L458 424 L465 428Z"/><path d="M497 420 L504 424 L497 428Z M503 420 L510 424 L503 428Z"/><rect x="358" y="445.3" width="190" height="1" fill="#f3f3f3"/></g></g></svg>
<div class="t" style="left:330.00px;top:443px;font-size:5.5px;color:#ffffff;letter-spacing:0.248px;opacity:0.5;">00:13</div>
<svg style="left:417.5px;top:100.5px" width="8" height="8" viewBox="0 0 8 8"><path d="M3 .8 H7.2 V7.2 H3 M.5 4 H5 M3.5 2.5 L5 4 L3.5 5.5" stroke="#9a9fa6" stroke-width=".7" fill="none"/></svg>
<svg style="left:430px;top:100.5px" width="8" height="8" viewBox="0 0 8 8"><path d="M.5 3 L4 .8 L7.5 2.6 V6 L4 7.6 L.5 6Z" fill="#3f86c8"/><path d="M.5 3 L4 4.5 L7.5 2.6 M4 4.5 V7.6" stroke="#bfe0f6" stroke-width=".5" fill="none"/><path d="M2 2 L4 .8 L6 2 L4 3Z" fill="#dff0fb"/></svg>
<svg style="left:440px;top:103.5px" width="4" height="3" viewBox="0 0 4 3"><path d="M.2 .3 H3.8 L2 2.7Z" fill="#333"/></svg>
<svg style="left:450.5px;top:100.5px" width="7" height="8" viewBox="0 0 7 8"><path d="M1 7 L5.6 1.6" stroke="#e8701e" stroke-width="1.6"/><path d="M4.8 2.4 L6.2 .8" stroke="#f2c040" stroke-width="1.6"/><path d="M.5 7.6 L1 6 L2 7Z" fill="#c8202a"/></svg>
<svg style="left:461px;top:100.5px" width="9" height="8" viewBox="0 0 9 8"><path d="M.5 4 L4.5 2.5 L8.5 4 V6.5 L4.5 7.8 L.5 6.5Z" fill="#35bfe6"/><path d="M2.5 1.8 L5 .6 L7.2 1.8 L7.2 3.6 L5 4.6 L2.5 3.6Z" fill="#f6c520"/><path d="M.5 4 L4.5 5.2 L8.5 4" stroke="#1f8fc6" stroke-width=".4" fill="none"/></svg>
<svg style="left:474px;top:100.3px" width="9" height="9" viewBox="0 0 9 9"><path d="M.5 2.5 L5.5 1 L8.5 2.2 V7 L3.5 8.4 L.5 7Z" fill="#1f7fc0"/><path d="M.5 2.5 L3.5 3.6 L8.5 2.2 L5.5 1Z" fill="#6cc4ee"/><path d="M3.5 3.6 V8.4 L8.5 7 V2.2Z" fill="#2f9bd8"/></svg>
<svg style="left:484px;top:103.5px" width="4" height="3" viewBox="0 0 4 3"><path d="M.2 .3 H3.8 L2 2.7Z" fill="#333"/></svg>
<svg style="left:493px;top:100.3px" width="9" height="9" viewBox="0 0 9 9"><path d="M.6 2.6 L5.4 1 L8.4 2.4 V6.8 L3.6 8.4 L.6 6.8Z M.6 2.6 L3.6 4 L8.4 2.4 M3.6 4 V8.4" fill="#fdfdfd" stroke="#9aa5b0" stroke-width=".5"/></svg>
<svg style="left:503.5px;top:103.5px" width="4" height="3" viewBox="0 0 4 3"><path d="M.2 .3 H3.8 L2 2.7Z" fill="#333"/></svg>
<svg style="left:512.5px;top:100.3px" width="9" height="9" viewBox="0 0 9 9"><circle cx="4.4" cy="4.4" r="4" fill="#f2a62a"/><path d="M4.4 .4 V8.4 M.4 4.4 H8.4 M1.6 1.6 L7.2 7.2 M7.2 1.6 L1.6 7.2" stroke="#e06a1a" stroke-width=".45"/><circle cx="3.2" cy="3" r="1.2" fill="#fbd768"/></svg>
<svg style="left:523px;top:103.5px" width="4" height="3" viewBox="0 0 4 3"><path d="M.2 .3 H3.8 L2 2.7Z" fill="#333"/></svg>
<svg style="left:532px;top:100.3px" width="9" height="9" viewBox="0 0 9 9"><rect x=".4" y=".4" width="8.2" height="8.2" fill="#5fb8e6" stroke="#2f86c8" stroke-width=".5"/><circle cx="4.5" cy="4.5" r="2.9" fill="#f7e9a8" stroke="#d8a82a" stroke-width=".6"/></svg>
<svg style="left:542.7px;top:103.5px" width="4" height="3" viewBox="0 0 4 3"><path d="M.2 .3 H3.8 L2 2.7Z" fill="#333"/></svg>
<svg style="left:552.3px;top:100.5px" width="8" height="8" viewBox="0 0 8 8"><circle cx="4" cy="4" r="2.4" fill="none" stroke="#d8303a" stroke-width=".7"/><path d="M4 .3 V7.7 M.3 4 H7.7" stroke="#d8303a" stroke-width=".6"/></svg>
<svg style="left:562px;top:103.5px" width="4" height="3" viewBox="0 0 4 3"><path d="M.2 .3 H3.8 L2 2.7Z" fill="#333"/></svg>
<svg style="left:571px;top:100.5px" width="9" height="9" viewBox="0 0 9 9"><rect x=".4" y=".4" width="7.6" height="7.6" fill="#f6f9fc" stroke="#9fb4c8" stroke-width=".6"/><rect x="1.6" y="4.4" width="2.6" height="2.4" fill="#3f86c8"/></svg>
<svg style="left:584.5px;top:100.3px" width="7" height="9" viewBox="0 0 7 9"><path d="M1 .5 V8 M6 .5 V8 M1 4 H6" stroke="#3f86c8" stroke-width=".8" fill="none"/><path d="M1 8 H6" stroke="#d8303a" stroke-width=".9"/></svg>
<svg style="left:594px;top:103.5px" width="4" height="3" viewBox="0 0 4 3"><path d="M.2 .3 H3.8 L2 2.7Z" fill="#333"/></svg>
<svg style="left:603px;top:100.5px" width="9" height="8" viewBox="0 0 9 8"><rect x=".4" y=".4" width="8.2" height="6" fill="#6b7488" stroke="#4a5266" stroke-width=".5"/><rect x="1.2" y="1.2" width="6.6" height="2" fill="#9aa6c0"/><path d="M1.5 6.4 Q4.5 8.4 7.5 6.4Z" fill="#8a93a8"/></svg>
<svg style="left:614px;top:103.5px" width="4" height="3" viewBox="0 0 4 3"><path d="M.2 .3 H3.8 L2 2.7Z" fill="#333"/></svg>
<div class="a" style="left:622.5px;top:103.6px;width:8.5px;height:2.6px;background:#111;"></div>
<div class="a" style="left:635.3px;top:100.6px;width:7.4px;height:8px;background:#b6dcf8;box-shadow:0 0 0 .6px #4a5a6a"></div>
<svg style="left:648px;top:101px" width="9" height="8" viewBox="0 0 9 8"><path d="M.4 2.6 L4.4 .8 L8.4 2.6 L4.4 4.4Z" fill="#3fc0c8"/><path d="M.4 2.6 V4.4 L4.4 6.4 L8.4 4.4 V2.6 L4.4 4.4Z" fill="#2f9aa8"/><path d="M.4 4.6 L4.4 6.6 L8.4 4.6 V5.6 L4.4 7.6 L.4 5.6Z" fill="#7fd0d8"/></svg>
<svg style="left:658px;top:103.5px" width="4" height="3" viewBox="0 0 4 3"><path d="M.2 .3 H3.8 L2 2.7Z" fill="#333"/></svg>
<div class="a" style="left:665px;top:98.6px;width:57.5px;height:12px;background:#f6f7f8;box-shadow:0 0 0 .5px #d3d6da"></div>
<svg style="left:668.5px;top:100.5px" width="6" height="9" viewBox="0 0 6 9"><path d="M2.7 .6 Q5 .8 4.8 3 Q4.6 4.2 3.8 5 V6.2 H1.8 V5 Q.8 4.2 .6 3 Q.5 .8 2.7 .6Z M1.9 7.2 H3.7" fill="none" stroke="#b5bac1" stroke-width=".55"/></svg>
<svg style="left:677px;top:101.7px" width="7" height="7" viewBox="0 0 7 7"><rect x=".5" y=".5" width="5.4" height="5.4" rx="2" fill="none" stroke="#a9aeb5" stroke-width=".6"/></svg>
<div class="t" style="left:686.00px;top:101px;font-size:5.5px;color:#9ea3aa;letter-spacing:-0.110px;">Layer0000</div>
<svg style="left:716px;top:104px" width="4" height="3" viewBox="0 0 4 3"><path d="M.5 .5 H3.3 L1.9 2.2Z" fill="#b9bdc3"/></svg>
</div></body></html>
